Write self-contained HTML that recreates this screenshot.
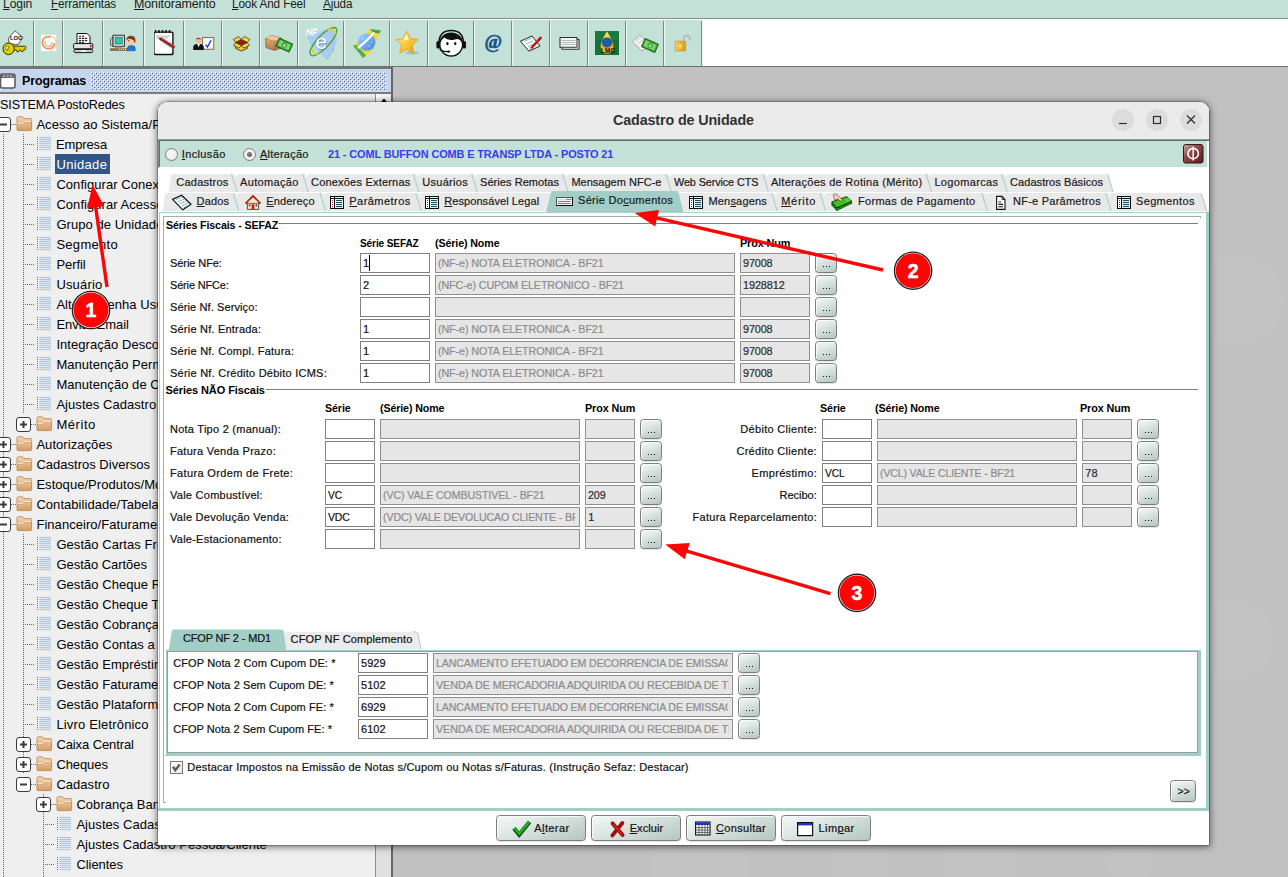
<!DOCTYPE html>
<html><head><meta charset="utf-8"><title>Cadastro de Unidade</title>
<style>
html,body{margin:0;padding:0;}
html{width:1288px;height:877px;overflow:hidden;}
body{width:1288px;height:877px;overflow:hidden;position:relative;background:#c0c0c0;font-family:'Liberation Sans',sans-serif;}
div,span.t,svg.ab{position:absolute;box-sizing:border-box;}
#root{left:0;top:0;width:1288px;height:877px;overflow:hidden;}
span.t{white-space:pre;}
span.k{-webkit-text-stroke:0.2px currentColor;}
u{text-decoration:underline;text-underline-offset:1px;}
.in{background:#fff;border:1px solid #808080;}
.dis{background:#e6e6e6;border:1px solid #8f8f8f;}
.btn{border:1px solid #7d7d7d;border-radius:3.5px;background:linear-gradient(160deg,#f3f8f6 0%,#e2ebe8 30%,#cbd8d4 65%,#b6c6c2 100%);box-shadow:inset 1px 1px 0 rgba(255,255,255,.7),0 1px 0 rgba(0,0,0,.10);}
.tab{background:#ebebeb;}

</style></head><body>
<div id="root">
<div style="left:0px;top:0px;width:1288px;height:877px;background:#c1c1c1;"></div>
<div style="left:646px;top:134px;width:52px;height:52px;border-radius:50%;background:rgba(255,255,255,0.05);"></div>
<div style="left:525px;top:155px;width:40px;height:40px;border-radius:50%;background:rgba(255,255,255,0.04);"></div>
<div style="left:576px;top:126px;width:28px;height:28px;border-radius:50%;background:rgba(255,255,255,0.04);"></div>
<div style="left:1030px;top:110px;width:120px;height:120px;border-radius:50%;background:rgba(255,255,255,0.025);"></div>
<div style="left:1195px;top:600px;width:80px;height:80px;border-radius:50%;background:rgba(255,255,255,0.03);"></div>
<div style="left:1195px;top:255px;width:90px;height:90px;border-radius:50%;background:rgba(255,255,255,0.02);"></div>
<div style="left:940px;top:830px;width:80px;height:80px;border-radius:50%;background:rgba(255,255,255,0.03);"></div>
<div style="left:830px;top:832px;width:60px;height:60px;border-radius:50%;background:rgba(255,255,255,0.03);"></div>
<div style="left:650px;top:820px;width:100px;height:100px;border-radius:50%;background:rgba(255,255,255,0.03);"></div>
<div style="left:1105px;top:835px;width:50px;height:50px;border-radius:50%;background:rgba(255,255,255,0.03);"></div>
<div style="left:0px;top:0px;width:1288px;height:18px;background:#c3e1d6;"></div>
<div style="left:0px;top:18px;width:1288px;height:1px;background:#878c89;"></div>
<div style="left:0px;top:19px;width:1288px;height:1px;background:#fbfdfc;"></div>
<span class="t" style="left:3.1px;top:-5.03px;font-size:12.5px;line-height:18px;color:#1a1a1a;letter-spacing:-0.120px;transform:scaleX(0.9697);transform-origin:0 0;"><u>L</u>ogin</span>
<span class="t" style="left:50.5px;top:-5.03px;font-size:12.5px;line-height:18px;color:#1a1a1a;letter-spacing:-0.120px;transform:scaleX(0.9360);transform-origin:0 0;"><u>F</u>erramentas</span>
<span class="t" style="left:133.5px;top:-5.03px;font-size:12.5px;line-height:18px;color:#1a1a1a;letter-spacing:-0.120px;transform:scaleX(0.9971);transform-origin:0 0;"><u>M</u>onitoramento</span>
<span class="t" style="left:232.3px;top:-5.03px;font-size:12.5px;line-height:18px;color:#1a1a1a;letter-spacing:-0.120px;transform:scaleX(0.9378);transform-origin:0 0;"><u>L</u>ook And Feel</span>
<span class="t" style="left:323.0px;top:-5.03px;font-size:12.5px;line-height:18px;color:#1a1a1a;letter-spacing:-0.120px;transform:scaleX(0.9364);transform-origin:0 0;"><u>A</u>juda</span>
<div style="left:0px;top:20px;width:1288px;height:46px;background:#ffffff;"></div>
<div style="left:0px;top:20px;width:702px;height:46px;background:#c3e1d6;"></div>
<div style="left:33px;top:21px;width:1px;height:45px;background:#7f8683;"></div>
<div style="left:34px;top:21px;width:1px;height:45px;background:#eef6f2;"></div>
<div style="left:62px;top:21px;width:1px;height:45px;background:#7f8683;"></div>
<div style="left:63px;top:21px;width:1px;height:45px;background:#eef6f2;"></div>
<div style="left:102px;top:21px;width:1px;height:45px;background:#7f8683;"></div>
<div style="left:103px;top:21px;width:1px;height:45px;background:#eef6f2;"></div>
<div style="left:143px;top:21px;width:1px;height:45px;background:#7f8683;"></div>
<div style="left:144px;top:21px;width:1px;height:45px;background:#eef6f2;"></div>
<div style="left:183px;top:21px;width:1px;height:45px;background:#7f8683;"></div>
<div style="left:184px;top:21px;width:1px;height:45px;background:#eef6f2;"></div>
<div style="left:221px;top:21px;width:1px;height:45px;background:#7f8683;"></div>
<div style="left:222px;top:21px;width:1px;height:45px;background:#eef6f2;"></div>
<div style="left:259px;top:21px;width:1px;height:45px;background:#7f8683;"></div>
<div style="left:260px;top:21px;width:1px;height:45px;background:#eef6f2;"></div>
<div style="left:297px;top:21px;width:1px;height:45px;background:#7f8683;"></div>
<div style="left:298px;top:21px;width:1px;height:45px;background:#eef6f2;"></div>
<div style="left:343px;top:21px;width:1px;height:45px;background:#7f8683;"></div>
<div style="left:344px;top:21px;width:1px;height:45px;background:#eef6f2;"></div>
<div style="left:389px;top:21px;width:1px;height:45px;background:#7f8683;"></div>
<div style="left:390px;top:21px;width:1px;height:45px;background:#eef6f2;"></div>
<div style="left:427px;top:21px;width:1px;height:45px;background:#7f8683;"></div>
<div style="left:428px;top:21px;width:1px;height:45px;background:#eef6f2;"></div>
<div style="left:473px;top:21px;width:1px;height:45px;background:#7f8683;"></div>
<div style="left:474px;top:21px;width:1px;height:45px;background:#eef6f2;"></div>
<div style="left:511px;top:21px;width:1px;height:45px;background:#7f8683;"></div>
<div style="left:512px;top:21px;width:1px;height:45px;background:#eef6f2;"></div>
<div style="left:549px;top:21px;width:1px;height:45px;background:#7f8683;"></div>
<div style="left:550px;top:21px;width:1px;height:45px;background:#eef6f2;"></div>
<div style="left:587px;top:21px;width:1px;height:45px;background:#7f8683;"></div>
<div style="left:588px;top:21px;width:1px;height:45px;background:#eef6f2;"></div>
<div style="left:625px;top:21px;width:1px;height:45px;background:#7f8683;"></div>
<div style="left:626px;top:21px;width:1px;height:45px;background:#eef6f2;"></div>
<div style="left:663px;top:21px;width:1px;height:45px;background:#7f8683;"></div>
<div style="left:664px;top:21px;width:1px;height:45px;background:#eef6f2;"></div>
<div style="left:701px;top:21px;width:1px;height:45px;background:#7f8683;"></div>
<div style="left:702px;top:21px;width:1px;height:45px;background:#eef6f2;"></div>
<div style="left:0px;top:66px;width:1288px;height:1px;background:#6f6f6f;"></div>
<div style="left:0px;top:67px;width:393px;height:2px;background:#757575;"></div>
<svg class="ab" style="left:0;top:0" width="702" height="66"><defs>
<linearGradient id="gStar" x1="0" y1="0" x2="1" y2="1"><stop offset="0" stop-color="#fff3a0"/><stop offset=".5" stop-color="#fbc93c"/><stop offset="1" stop-color="#e89a18"/></linearGradient>
<linearGradient id="gGlobe" x1="0" y1="0" x2="1" y2="1"><stop offset="0" stop-color="#a8d4fa"/><stop offset="1" stop-color="#3f86dd"/></linearGradient>
<linearGradient id="gBox" x1="0" y1="0" x2="0" y2="1"><stop offset="0" stop-color="#e2b98a"/><stop offset="1" stop-color="#b5793f"/></linearGradient>
<linearGradient id="gLock" x1="0" y1="0" x2="1" y2="0"><stop offset="0" stop-color="#f7d25a"/><stop offset="1" stop-color="#d9a018"/></linearGradient>
</defs><path d="M8.4 38.2 L15 30.8 L22.8 37.4 L18 44.6 L9.4 43.8 Z" fill="#fff" stroke="#4a4a4a" stroke-width=".9"/><text x="10" y="40.4" font-family="Liberation Sans,sans-serif" font-size="5.8" font-weight="bold" fill="#111">LOG</text><path d="M11 46.2 H25.2 L26 47.6 L25 49.8 H23.6 L22.8 51.6 H21.4 L20.6 50 H19.4 L18.6 51.8 H17 L16.2 50 H11 Z" fill="#e3d000" stroke="#2a2600" stroke-width=".9" stroke-linejoin="round"/><ellipse cx="8.6" cy="48.8" rx="5.6" ry="5.8" fill="#e3d000" stroke="#2a2600" stroke-width="1"/><path d="M6 46.6 Q8.4 45 9.4 47 Q7 48 8 50.2 Q6 50.4 5.6 48.6 Z" fill="#fff" stroke="#2a2600" stroke-width=".6"/><rect x="41" y="34.8" width="15.2" height="16.2" fill="#fdfcfa"/><path d="M51 37 A6.2 6.2 0 1 0 54.6 43.4" fill="none" stroke="#f08b4f" stroke-width="1.5"/><path d="M45.4 41 A3.6 3.6 0 1 0 52 42" fill="none" stroke="#f4a070" stroke-width="1.1"/><path d="M52.5 36.6 A7.4 7.4 0 0 1 50.4 50.2" fill="none" stroke="#f9b48a" stroke-width="1"/><path d="M77 44 V33.5 H87 L90 36.5 V44 Z" fill="#fff" stroke="#111" stroke-width="1"/><path d="M79 36.2 H85 M79 38.4 H88 M79 40.6 H88 M79 42.6 H84" stroke="#222" stroke-width="1.1" stroke-dasharray="2.2 .8"/><rect x="73.6" y="43.6" width="19.2" height="5.2" rx="1" fill="#e4e4e4" stroke="#111" stroke-width="1"/><rect x="90" y="45" width="1.5" height="2.4" fill="#e11"/><rect x="74" y="49.4" width="18.6" height="3.2" rx="1.2" fill="#c9c9c9" stroke="#111" stroke-width="1"/><rect x="81" y="50.3" width="5" height="1.4" fill="#fff"/><path d="M110.5 39 L113 37 V46 L110.5 45 Z" fill="#cfcfcf" stroke="#333" stroke-width=".7"/><rect x="113" y="35.2" width="11.4" height="11.2" fill="#d6d6d6" stroke="#222" stroke-width=".9"/><rect x="115.2" y="37.2" width="7" height="6.8" fill="#2fc6a8" stroke="#1a6e62" stroke-width=".6"/><rect x="115" y="46.6" width="7" height="1.6" fill="#999"/><rect x="110" y="48.3" width="18" height="2.6" fill="#8a6a42"/><path d="M119 49.5 H127" stroke="#eee" stroke-width="1" stroke-dasharray="1 1"/><circle cx="130.6" cy="40.8" r="4.4" fill="#f7c9a4"/><path d="M126.2 40.5 Q126.5 35.5 131.5 35.8 Q136 36.2 135.4 42 Q134.4 44 133.8 40.6 Q131 38.4 128 39 Z" fill="#7a3b12"/><path d="M127.6 50.8 V47.8 Q127.8 45.6 130.6 45.6 Q135 45.6 135.2 48 V50.8 Z" fill="#1b78d6" stroke="#0e4a8c" stroke-width=".5"/><rect x="128.3" y="40" width="1" height="1.3" fill="#222"/><rect x="154" y="31.6" width="19.6" height="23.6" rx="1.5" fill="#111"/><rect x="154.6" y="32.8" width="17.6" height="21" rx="1" fill="#fdfdfd"/><path d="M155.5 30 v3 M159 30 v3 M162.5 30 v3 M166 30 v3 M169.5 30 v3" stroke="#111" stroke-width="1.5"/><path d="M156 36.2 H170 M156 38 H168" stroke="#aaa" stroke-width=".8"/><path d="M160.2 38.6 L174.6 47.6" stroke="#8c1f1f" stroke-width="3"/><path d="M161.2 38 L175 46.6" stroke="#d65a5a" stroke-width="1"/><path d="M158.2 37.4 L162 38.4 L160.4 40.6 Z" fill="#333"/><path d="M162 42 L173 49" stroke="#999" stroke-width="1" opacity=".6"/><rect x="202.4" y="37.6" width="11.4" height="11.6" fill="#fff8ee" stroke="#7a5a3a" stroke-width=".9"/><path d="M205.6 44.6 L207.4 47 L211 40.4" fill="none" stroke="#1a34e8" stroke-width="1.3"/><circle cx="198.6" cy="40.6" r="3" fill="#f3b89a"/><path d="M195.6 39.6 Q198.6 35.8 201.6 39.6 Q198.6 38.2 195.6 39.6 Z" fill="#6a3a1a"/><path d="M193.2 50 V46.8 Q193.6 44.4 197 44 L198.6 46.4 L200.2 44 Q203.4 44.4 203.8 47 V50 Z" fill="#111"/><path d="M197.6 44.2 L198.6 47.6 L199.6 44.2 Z" fill="#fff"/><path d="M235.6 42.4 L241.4 45.6 L247.4 42.4 V48.4 L241.4 51 L235.6 48.4 Z" fill="#f1c233" stroke="#3a2a00" stroke-width=".8"/><path d="M235.6 42.4 L241.4 39.4 L247.4 42.4 L241.4 45.6 Z" fill="#a3160e" stroke="#3a2a00" stroke-width=".7"/><path d="M235.6 42.4 L233.4 39.4 L238.6 36.6 L241.4 39.4 Z M247.4 42.4 L249.8 39.4 L244.4 36.4 L241.4 39.4 Z M235.6 42.6 L233.6 45.6 L239 48 L241.4 45.6 Z M247.4 42.6 L249.4 45.4 L244 48 L241.4 45.6 Z" fill="#f6d250" stroke="#3a2a00" stroke-width=".7"/><path d="M265.6 38.6 L271.8 35.6 L281.4 38 L281 48 L274.6 50.4 L266 47.6 Z" fill="url(#gBox)" stroke="#7c5226" stroke-width=".7"/><path d="M265.6 38.6 L274.8 41 L281.4 38 M274.8 41 L274.6 50.4" fill="none" stroke="#8a5c2c" stroke-width=".7"/><path d="M265.6 38.6 L271.8 35.6 L281.4 38 L274.8 41 Z" fill="#ecc79c"/><g transform="rotate(24 284 45)"><rect x="277" y="40.6" width="14.6" height="8.8" fill="#2f9e2a" stroke="#174d12" stroke-width=".8"/><rect x="278.4" y="42" width="11.8" height="6" fill="#7ad46a"/><ellipse cx="284.3" cy="45" rx="2.4" ry="2.8" fill="#2f8e2a"/><text x="283" y="47" font-size="5" font-family="Liberation Sans,sans-serif" font-weight="bold" fill="#d8ffd0">$</text></g><path d="M311 33.4 Q315 31.6 319.6 32.6 L324 29.4 Q331 28.6 334.6 33 L336.8 37.6 Q336.6 44 334 47.6 Q333.6 52 330 54.6 L327.6 58.8 L322.6 57 L320.4 52.4 Q314.6 51.4 313 46.6 Q308.6 44.6 309.6 40.6 Q306 38.6 307 36.2 Q308 34 311 33.4 Z" fill="#a8cdf4"/><path d="M334 47.6 Q333.6 52 330 54.6 L327.6 58.8 L325.6 58" fill="none" stroke="#7f93ad" stroke-width=".8" opacity=".7"/><ellipse cx="323.4" cy="41.6" rx="6.2" ry="18.4" transform="rotate(43 323.4 41.6)" fill="none" stroke="#58a23a" stroke-width="1.5"/><path d="M312.4 48.6 Q312.4 54.6 318.4 53.6" fill="none" stroke="#d6cf3a" stroke-width="1.6"/><path d="M327.6 29.6 Q335.4 28.4 335.4 34.6" fill="none" stroke="#d6cf3a" stroke-width="1.6"/><text x="316.4" y="50" font-family="Liberation Sans,sans-serif" font-size="21" fill="#6b7890" opacity=".8">e</text><text x="315.6" y="49.2" font-family="Liberation Sans,sans-serif" font-size="21" fill="#fff">e</text><text x="306.6" y="35.2" font-family="Liberation Sans,sans-serif" font-size="8.8" font-weight="bold" font-style="italic" fill="#8a96a6">NF</text><text x="306" y="34.6" font-family="Liberation Sans,sans-serif" font-size="8.8" font-weight="bold" font-style="italic" fill="#fff" stroke="#fff" stroke-width=".3">NF</text><path d="M353 45.6 L370 29 L381 30.6 L378 37 L373 50 L363 58 L361.6 52 Z" fill="#f2d838"/><path d="M370 29 L381 30.6 L379.4 33.6 L373 32.4 Z" fill="#3fa845"/><path d="M353 45.6 L363 58 L366 55.4 L356.4 45 Z" fill="#3fa845" opacity=".9"/><circle cx="366.6" cy="42" r="8.8" fill="url(#gGlobe)"/><path d="M358.6 47.6 Q366 41.6 373.6 33.2" fill="none" stroke="#fff" stroke-width="2.2" stroke-linecap="round"/><circle cx="363" cy="38.6" r=".6" fill="#fff"/><circle cx="369" cy="46" r=".6" fill="#fff"/><circle cx="371.6" cy="42.6" r=".5" fill="#fff"/><ellipse cx="412" cy="52.8" rx="7" ry="1.6" fill="#6b8f80" opacity=".35"/><path d="M406.6 31 L410.2 38.6 L418 39.6 L412.2 45 L413.8 53.4 L406.6 49.2 L399.8 53 L401.4 45 L396.6 39.8 L403.4 38.6 Z" fill="url(#gStar)" stroke="#e8a21c" stroke-width=".9" stroke-linejoin="round"/><path d="M406.4 34 L408.8 39.8 L403 40.2 Z" fill="#fffbe0" opacity=".8"/><circle cx="451.2" cy="44.6" r="11.4" fill="#fff" stroke="#111" stroke-width="1.4"/><path d="M440.4 43 Q440 33.4 451.2 33 Q462.4 33.4 462 43 Q459.6 38 455 39.4 Q448.6 41.4 444 37.6 Q441.4 39.4 440.4 43 Z" fill="#111"/><path d="M439 44 Q438.6 30.6 451.2 30.6 Q463.8 30.6 463.4 44" fill="none" stroke="#111" stroke-width="1.5"/><rect x="436.4" y="41" width="3.6" height="7.6" rx="1.6" fill="#111"/><rect x="462.4" y="41" width="3.6" height="7.6" rx="1.6" fill="#111"/><ellipse cx="447.4" cy="43.6" rx="1.2" ry="1.6" fill="#111"/><ellipse cx="455.2" cy="43.6" rx="1.2" ry="1.6" fill="#111"/><path d="M439.6 48.6 Q441.6 51.8 447.6 51.6" fill="none" stroke="#111" stroke-width="1.2"/><ellipse cx="448.6" cy="51.6" rx="1.8" ry="1.1" fill="#111"/><text x="484.4" y="48" font-family="Liberation Serif,serif" font-size="18.5" font-weight="bold" fill="#14508c" stroke="#14508c" stroke-width=".5" textLength="17.5" lengthAdjust="spacingAndGlyphs">@</text><path d="M520.4 41.2 L532 36 L540 46 L529 51.2 Z" fill="#fff" stroke="#111" stroke-width=".9"/><path d="M524 41.4 L531.6 38 M526 44 L533.6 40.6 M528 46.6 L535.6 43.2" stroke="#5aa" stroke-width=".8"/><path d="M531.4 48 L540.6 37.8" stroke="#c41414" stroke-width="2.6" stroke-linecap="round"/><path d="M529.4 50.6 L532.4 49.2 L530.4 47.2 Z" fill="#f5e2c0" stroke="#733" stroke-width=".4"/><rect x="562" y="39.6" width="17" height="9.6" fill="#fff" stroke="#111" stroke-width=".9"/><rect x="560" y="37.6" width="17" height="9.6" fill="#fff" stroke="#111" stroke-width=".9"/><path d="M561.4 40.4 H575.6 M561.4 42.4 H575.6 M561.4 44.4 H575.6" stroke="#9aa" stroke-width=".9"/><rect x="595" y="31" width="24" height="24" fill="#16703a"/><rect x="595" y="31" width="24" height="9" fill="#1f7f48" opacity=".6"/><path d="M607 31.6 Q600 42.6 600.6 47 Q601 53.6 607 53.8 Q613 53.6 613.4 47 Q614 42.6 607 31.6 Z" fill="#f5a81c"/><path d="M607 31.6 Q604.6 35.6 603.4 38.4 L610.6 38.4 Q609.4 35.6 607 31.6 Z" fill="#f8e03a"/><circle cx="607" cy="42.4" r="5.2" fill="#1e5aa8"/><text x="600.8" y="53.4" font-family="Liberation Sans,sans-serif" font-size="6.4" font-weight="bold" fill="#111" letter-spacing=".3">LMC</text><path d="M632.4 41.6 L640 35 L649.6 44.6 L642 51 Z" fill="#f2f2f2" stroke="#9a9a9a" stroke-width=".8"/><path d="M636 41 L641 37 M638 43.4 L643 39.4" stroke="#bbb" stroke-width=".8"/><g transform="rotate(24 650 45.6)"><rect x="642.6" y="41" width="14.6" height="9" fill="#2f9e2a" stroke="#174d12" stroke-width=".8"/><rect x="644" y="42.4" width="11.8" height="6.2" fill="#7ad46a"/><ellipse cx="650" cy="45.5" rx="2.4" ry="2.8" fill="#2f8e2a"/><text x="648.6" y="47.5" font-size="5" font-family="Liberation Sans,sans-serif" font-weight="bold" fill="#d8ffd0">$</text></g><path d="M683.6 41.6 V38.6 Q683.8 35.6 686.8 35.6 Q689.8 35.6 690 38.8 V40.4" fill="none" stroke="#b8b8b8" stroke-width="1.6"/><rect x="675.2" y="41.2" width="10.4" height="9.8" rx="1" fill="url(#gLock)" stroke="#c08a10" stroke-width=".6"/><path d="M681.4 44.6 L678.4 46 L681.4 47.6 Z" fill="#fff2c0"/></svg>
<div style="left:0px;top:69px;width:391px;height:23px;background:#c5d6ee;"></div>
<svg class="ab" style="left:91px;top:72px" width="295" height="19"><defs><pattern id="grip" width="4" height="4" patternUnits="userSpaceOnUse"><rect x="1" y="1" width="1" height="1" fill="#5c646e"/><rect x="0" y="0" width="1" height="1" fill="#fff"/><rect x="3" y="3" width="1" height="1" fill="#5c646e"/><rect x="2" y="2" width="1" height="1" fill="#fff"/></pattern></defs><rect width="295" height="19" fill="url(#grip)"/></svg>
<svg class="ab" style="left:0px;top:73px" width="18" height="17"><rect x="0.5" y="1" width="14.5" height="14" rx="2" fill="#fff" stroke="#5a5a5a" stroke-width="1.6"/><rect x="1" y="1.5" width="13.5" height="3.5" fill="#6a6a6a"/><rect x="3" y="2.6" width="2" height="1" fill="#ddd"/><rect x="6.5" y="2.6" width="2" height="1" fill="#ddd"/><rect x="10" y="2.6" width="2" height="1" fill="#ddd"/></svg>
<span class="t" style="left:21.7px;top:71.87px;font-size:12.5px;line-height:18px;color:#000;letter-spacing:-0.120px;font-weight:bold;transform:scaleX(0.9976);transform-origin:0 0;">Programas</span>
<div style="left:0px;top:92px;width:391px;height:2px;background:#7b7b7b;"></div>
<div style="left:0px;top:94px;width:391px;height:783px;background:#efefef;"></div>
<div style="left:375px;top:94px;width:16px;height:783px;background:#e0e0e0;border-left:1px solid #8c8c8c;"></div>
<div style="left:376px;top:94px;width:15px;height:16px;background:linear-gradient(135deg,#fff,#e4e4e4);border-bottom:1px solid #999;"></div>
<svg class="ab" style="left:378px;top:96px" width="12" height="8"><path d="M2.5 6.5 L6 2.5 L9.5 6.5 Z" fill="#000"/></svg>
<div style="left:391px;top:67px;width:2px;height:810px;background:#666;"></div>
<div style="left:3px;top:134px;width:1px;height:743px;background:repeating-linear-gradient(to bottom,#666 0 1px,transparent 1px 2px);"></div>
<div style="left:23px;top:134px;width:1px;height:280px;background:repeating-linear-gradient(to bottom,#666 0 1px,transparent 1px 2px);"></div>
<div style="left:23px;top:534px;width:1px;height:240px;background:repeating-linear-gradient(to bottom,#666 0 1px,transparent 1px 2px);"></div>
<div style="left:43px;top:794px;width:1px;height:83px;background:repeating-linear-gradient(to bottom,#666 0 1px,transparent 1px 2px);"></div>
<span class="t" style="left:0.3px;top:95.70px;font-size:13px;line-height:18px;color:#000;letter-spacing:-0.120px;transform:scaleX(0.9686);transform-origin:0 0;">SISTEMA PostoRedes</span>
<svg class="ab" style="left:-4px;top:117px" width="16" height="16"><rect x="0.5" y="0.5" width="14" height="14" rx="2.5" fill="#fff" stroke="#3a3a3a"/><rect x="4" y="6.5" width="7" height="2" fill="#3c3c3c"/></svg>
<div style="left:11px;top:124px;width:5px;height:1px;background:repeating-linear-gradient(to right,#666 0 1px,transparent 1px 2px);"></div>
<svg class="ab" style="left:15.5px;top:115.6px" width="17" height="16"><defs><linearGradient id="fg" x1="0" y1="0" x2="0" y2="1"><stop offset="0" stop-color="#f6d6b4"/><stop offset="1" stop-color="#d39c62"/></linearGradient></defs><path d="M1 2.2 Q1 0.8 2.4 0.8 L6 0.8 Q7 0.8 7.6 2 L8 2.6 L14.6 2.6 Q15.6 2.6 15.6 3.6 L15.6 13.6 Q15.6 14.6 14.6 14.6 L2 14.6 Q1 14.6 1 13.6 Z" fill="url(#fg)" stroke="#c08a55" stroke-width="0.9"/><path d="M1.3 7.6 L6.2 7.6 L8 5.6 L15.3 5.6" fill="none" stroke="#fbe9d6" stroke-width="1"/><path d="M1.3 8.5 L6.5 8.5 L8.3 6.5 L15.3 6.5" fill="none" stroke="#c99560" stroke-width="0.7" opacity=".7"/></svg>
<span class="t" style="left:36.4px;top:115.70px;font-size:13px;line-height:18px;color:#000;letter-spacing:0.050px;">Acesso ao Sistema/Perfil</span>
<div style="left:23px;top:144px;width:12px;height:1px;background:repeating-linear-gradient(to right,#666 0 1px,transparent 1px 2px);"></div>
<svg class="ab" style="left:37px;top:137px" width="15" height="14"><rect x="0" y="0" width="1" height="1" fill="#2ca02c"/><rect x="2.3" y="0" width="11.7" height="1" fill="#a9bfd6" opacity="0.95"/><rect x="2.3" y="1" width="11.7" height="1" fill="#dfe7ee"/><rect x="0" y="2" width="1" height="1" fill="#2ca02c"/><rect x="2.3" y="2" width="11.7" height="1" fill="#a9bfd6" opacity="0.9099999999999999"/><rect x="2.3" y="3" width="11.7" height="1" fill="#dfe7ee"/><rect x="0" y="4" width="1" height="1" fill="#2ca02c"/><rect x="2.3" y="4" width="11.7" height="1" fill="#a9bfd6" opacity="0.87"/><rect x="2.3" y="5" width="11.7" height="1" fill="#dfe7ee"/><rect x="0" y="6" width="1" height="1" fill="#2ca02c"/><rect x="2.3" y="6" width="11.7" height="1" fill="#a9bfd6" opacity="0.83"/><rect x="2.3" y="7" width="11.7" height="1" fill="#dfe7ee"/><rect x="0" y="8" width="1" height="1" fill="#2ca02c"/><rect x="2.3" y="8" width="11.7" height="1" fill="#a9bfd6" opacity="0.7899999999999999"/><rect x="2.3" y="9" width="11.7" height="1" fill="#dfe7ee"/><rect x="0" y="10" width="1" height="1" fill="#2ca02c"/><rect x="2.3" y="10" width="11.7" height="1" fill="#a9bfd6" opacity="0.75"/><rect x="2.3" y="11" width="11.7" height="1" fill="#dfe7ee"/><rect x="0" y="12" width="1" height="1" fill="#2ca02c"/><rect x="2.3" y="12" width="11.7" height="1" fill="#a9bfd6" opacity="0.71"/><rect x="2.3" y="13" width="11.7" height="1" fill="#dfe7ee"/></svg>
<span class="t" style="left:56.4px;top:135.70px;font-size:13px;line-height:18px;color:#000;letter-spacing:-0.120px;transform:scaleX(0.9978);transform-origin:0 0;">Empresa</span>
<div style="left:23px;top:164px;width:12px;height:1px;background:repeating-linear-gradient(to right,#666 0 1px,transparent 1px 2px);"></div>
<svg class="ab" style="left:37px;top:157px" width="15" height="14"><rect x="0" y="0" width="1" height="1" fill="#2ca02c"/><rect x="2.3" y="0" width="11.7" height="1" fill="#a9bfd6" opacity="0.95"/><rect x="2.3" y="1" width="11.7" height="1" fill="#dfe7ee"/><rect x="0" y="2" width="1" height="1" fill="#2ca02c"/><rect x="2.3" y="2" width="11.7" height="1" fill="#a9bfd6" opacity="0.9099999999999999"/><rect x="2.3" y="3" width="11.7" height="1" fill="#dfe7ee"/><rect x="0" y="4" width="1" height="1" fill="#2ca02c"/><rect x="2.3" y="4" width="11.7" height="1" fill="#a9bfd6" opacity="0.87"/><rect x="2.3" y="5" width="11.7" height="1" fill="#dfe7ee"/><rect x="0" y="6" width="1" height="1" fill="#2ca02c"/><rect x="2.3" y="6" width="11.7" height="1" fill="#a9bfd6" opacity="0.83"/><rect x="2.3" y="7" width="11.7" height="1" fill="#dfe7ee"/><rect x="0" y="8" width="1" height="1" fill="#2ca02c"/><rect x="2.3" y="8" width="11.7" height="1" fill="#a9bfd6" opacity="0.7899999999999999"/><rect x="2.3" y="9" width="11.7" height="1" fill="#dfe7ee"/><rect x="0" y="10" width="1" height="1" fill="#2ca02c"/><rect x="2.3" y="10" width="11.7" height="1" fill="#a9bfd6" opacity="0.75"/><rect x="2.3" y="11" width="11.7" height="1" fill="#dfe7ee"/><rect x="0" y="12" width="1" height="1" fill="#2ca02c"/><rect x="2.3" y="12" width="11.7" height="1" fill="#a9bfd6" opacity="0.71"/><rect x="2.3" y="13" width="11.7" height="1" fill="#dfe7ee"/></svg>
<div style="left:55px;top:154px;width:55px;height:20px;background:#30568a;"></div>
<span class="t" style="left:56.6px;top:155.70px;font-size:13px;line-height:18px;color:#fff;letter-spacing:0.310px;">Unidade</span>
<div style="left:23px;top:184px;width:12px;height:1px;background:repeating-linear-gradient(to right,#666 0 1px,transparent 1px 2px);"></div>
<svg class="ab" style="left:37px;top:177px" width="15" height="14"><rect x="0" y="0" width="1" height="1" fill="#2ca02c"/><rect x="2.3" y="0" width="11.7" height="1" fill="#a9bfd6" opacity="0.95"/><rect x="2.3" y="1" width="11.7" height="1" fill="#dfe7ee"/><rect x="0" y="2" width="1" height="1" fill="#2ca02c"/><rect x="2.3" y="2" width="11.7" height="1" fill="#a9bfd6" opacity="0.9099999999999999"/><rect x="2.3" y="3" width="11.7" height="1" fill="#dfe7ee"/><rect x="0" y="4" width="1" height="1" fill="#2ca02c"/><rect x="2.3" y="4" width="11.7" height="1" fill="#a9bfd6" opacity="0.87"/><rect x="2.3" y="5" width="11.7" height="1" fill="#dfe7ee"/><rect x="0" y="6" width="1" height="1" fill="#2ca02c"/><rect x="2.3" y="6" width="11.7" height="1" fill="#a9bfd6" opacity="0.83"/><rect x="2.3" y="7" width="11.7" height="1" fill="#dfe7ee"/><rect x="0" y="8" width="1" height="1" fill="#2ca02c"/><rect x="2.3" y="8" width="11.7" height="1" fill="#a9bfd6" opacity="0.7899999999999999"/><rect x="2.3" y="9" width="11.7" height="1" fill="#dfe7ee"/><rect x="0" y="10" width="1" height="1" fill="#2ca02c"/><rect x="2.3" y="10" width="11.7" height="1" fill="#a9bfd6" opacity="0.75"/><rect x="2.3" y="11" width="11.7" height="1" fill="#dfe7ee"/><rect x="0" y="12" width="1" height="1" fill="#2ca02c"/><rect x="2.3" y="12" width="11.7" height="1" fill="#a9bfd6" opacity="0.71"/><rect x="2.3" y="13" width="11.7" height="1" fill="#dfe7ee"/></svg>
<span class="t" style="left:56.4px;top:175.70px;font-size:13px;line-height:18px;color:#000;letter-spacing:0.050px;">Configurar Conexões</span>
<div style="left:23px;top:204px;width:12px;height:1px;background:repeating-linear-gradient(to right,#666 0 1px,transparent 1px 2px);"></div>
<svg class="ab" style="left:37px;top:197px" width="15" height="14"><rect x="0" y="0" width="1" height="1" fill="#2ca02c"/><rect x="2.3" y="0" width="11.7" height="1" fill="#a9bfd6" opacity="0.95"/><rect x="2.3" y="1" width="11.7" height="1" fill="#dfe7ee"/><rect x="0" y="2" width="1" height="1" fill="#2ca02c"/><rect x="2.3" y="2" width="11.7" height="1" fill="#a9bfd6" opacity="0.9099999999999999"/><rect x="2.3" y="3" width="11.7" height="1" fill="#dfe7ee"/><rect x="0" y="4" width="1" height="1" fill="#2ca02c"/><rect x="2.3" y="4" width="11.7" height="1" fill="#a9bfd6" opacity="0.87"/><rect x="2.3" y="5" width="11.7" height="1" fill="#dfe7ee"/><rect x="0" y="6" width="1" height="1" fill="#2ca02c"/><rect x="2.3" y="6" width="11.7" height="1" fill="#a9bfd6" opacity="0.83"/><rect x="2.3" y="7" width="11.7" height="1" fill="#dfe7ee"/><rect x="0" y="8" width="1" height="1" fill="#2ca02c"/><rect x="2.3" y="8" width="11.7" height="1" fill="#a9bfd6" opacity="0.7899999999999999"/><rect x="2.3" y="9" width="11.7" height="1" fill="#dfe7ee"/><rect x="0" y="10" width="1" height="1" fill="#2ca02c"/><rect x="2.3" y="10" width="11.7" height="1" fill="#a9bfd6" opacity="0.75"/><rect x="2.3" y="11" width="11.7" height="1" fill="#dfe7ee"/><rect x="0" y="12" width="1" height="1" fill="#2ca02c"/><rect x="2.3" y="12" width="11.7" height="1" fill="#a9bfd6" opacity="0.71"/><rect x="2.3" y="13" width="11.7" height="1" fill="#dfe7ee"/></svg>
<span class="t" style="left:56.4px;top:195.70px;font-size:13px;line-height:18px;color:#000;letter-spacing:0.050px;">Configurar Acessos</span>
<div style="left:23px;top:224px;width:12px;height:1px;background:repeating-linear-gradient(to right,#666 0 1px,transparent 1px 2px);"></div>
<svg class="ab" style="left:37px;top:217px" width="15" height="14"><rect x="0" y="0" width="1" height="1" fill="#2ca02c"/><rect x="2.3" y="0" width="11.7" height="1" fill="#a9bfd6" opacity="0.95"/><rect x="2.3" y="1" width="11.7" height="1" fill="#dfe7ee"/><rect x="0" y="2" width="1" height="1" fill="#2ca02c"/><rect x="2.3" y="2" width="11.7" height="1" fill="#a9bfd6" opacity="0.9099999999999999"/><rect x="2.3" y="3" width="11.7" height="1" fill="#dfe7ee"/><rect x="0" y="4" width="1" height="1" fill="#2ca02c"/><rect x="2.3" y="4" width="11.7" height="1" fill="#a9bfd6" opacity="0.87"/><rect x="2.3" y="5" width="11.7" height="1" fill="#dfe7ee"/><rect x="0" y="6" width="1" height="1" fill="#2ca02c"/><rect x="2.3" y="6" width="11.7" height="1" fill="#a9bfd6" opacity="0.83"/><rect x="2.3" y="7" width="11.7" height="1" fill="#dfe7ee"/><rect x="0" y="8" width="1" height="1" fill="#2ca02c"/><rect x="2.3" y="8" width="11.7" height="1" fill="#a9bfd6" opacity="0.7899999999999999"/><rect x="2.3" y="9" width="11.7" height="1" fill="#dfe7ee"/><rect x="0" y="10" width="1" height="1" fill="#2ca02c"/><rect x="2.3" y="10" width="11.7" height="1" fill="#a9bfd6" opacity="0.75"/><rect x="2.3" y="11" width="11.7" height="1" fill="#dfe7ee"/><rect x="0" y="12" width="1" height="1" fill="#2ca02c"/><rect x="2.3" y="12" width="11.7" height="1" fill="#a9bfd6" opacity="0.71"/><rect x="2.3" y="13" width="11.7" height="1" fill="#dfe7ee"/></svg>
<span class="t" style="left:56.4px;top:215.70px;font-size:13px;line-height:18px;color:#000;letter-spacing:0.050px;">Grupo de Unidades</span>
<div style="left:23px;top:244px;width:12px;height:1px;background:repeating-linear-gradient(to right,#666 0 1px,transparent 1px 2px);"></div>
<svg class="ab" style="left:37px;top:237px" width="15" height="14"><rect x="0" y="0" width="1" height="1" fill="#2ca02c"/><rect x="2.3" y="0" width="11.7" height="1" fill="#a9bfd6" opacity="0.95"/><rect x="2.3" y="1" width="11.7" height="1" fill="#dfe7ee"/><rect x="0" y="2" width="1" height="1" fill="#2ca02c"/><rect x="2.3" y="2" width="11.7" height="1" fill="#a9bfd6" opacity="0.9099999999999999"/><rect x="2.3" y="3" width="11.7" height="1" fill="#dfe7ee"/><rect x="0" y="4" width="1" height="1" fill="#2ca02c"/><rect x="2.3" y="4" width="11.7" height="1" fill="#a9bfd6" opacity="0.87"/><rect x="2.3" y="5" width="11.7" height="1" fill="#dfe7ee"/><rect x="0" y="6" width="1" height="1" fill="#2ca02c"/><rect x="2.3" y="6" width="11.7" height="1" fill="#a9bfd6" opacity="0.83"/><rect x="2.3" y="7" width="11.7" height="1" fill="#dfe7ee"/><rect x="0" y="8" width="1" height="1" fill="#2ca02c"/><rect x="2.3" y="8" width="11.7" height="1" fill="#a9bfd6" opacity="0.7899999999999999"/><rect x="2.3" y="9" width="11.7" height="1" fill="#dfe7ee"/><rect x="0" y="10" width="1" height="1" fill="#2ca02c"/><rect x="2.3" y="10" width="11.7" height="1" fill="#a9bfd6" opacity="0.75"/><rect x="2.3" y="11" width="11.7" height="1" fill="#dfe7ee"/><rect x="0" y="12" width="1" height="1" fill="#2ca02c"/><rect x="2.3" y="12" width="11.7" height="1" fill="#a9bfd6" opacity="0.71"/><rect x="2.3" y="13" width="11.7" height="1" fill="#dfe7ee"/></svg>
<span class="t" style="left:56.4px;top:235.70px;font-size:13px;line-height:18px;color:#000;letter-spacing:0.291px;">Segmento</span>
<div style="left:23px;top:264px;width:12px;height:1px;background:repeating-linear-gradient(to right,#666 0 1px,transparent 1px 2px);"></div>
<svg class="ab" style="left:37px;top:257px" width="15" height="14"><rect x="0" y="0" width="1" height="1" fill="#2ca02c"/><rect x="2.3" y="0" width="11.7" height="1" fill="#a9bfd6" opacity="0.95"/><rect x="2.3" y="1" width="11.7" height="1" fill="#dfe7ee"/><rect x="0" y="2" width="1" height="1" fill="#2ca02c"/><rect x="2.3" y="2" width="11.7" height="1" fill="#a9bfd6" opacity="0.9099999999999999"/><rect x="2.3" y="3" width="11.7" height="1" fill="#dfe7ee"/><rect x="0" y="4" width="1" height="1" fill="#2ca02c"/><rect x="2.3" y="4" width="11.7" height="1" fill="#a9bfd6" opacity="0.87"/><rect x="2.3" y="5" width="11.7" height="1" fill="#dfe7ee"/><rect x="0" y="6" width="1" height="1" fill="#2ca02c"/><rect x="2.3" y="6" width="11.7" height="1" fill="#a9bfd6" opacity="0.83"/><rect x="2.3" y="7" width="11.7" height="1" fill="#dfe7ee"/><rect x="0" y="8" width="1" height="1" fill="#2ca02c"/><rect x="2.3" y="8" width="11.7" height="1" fill="#a9bfd6" opacity="0.7899999999999999"/><rect x="2.3" y="9" width="11.7" height="1" fill="#dfe7ee"/><rect x="0" y="10" width="1" height="1" fill="#2ca02c"/><rect x="2.3" y="10" width="11.7" height="1" fill="#a9bfd6" opacity="0.75"/><rect x="2.3" y="11" width="11.7" height="1" fill="#dfe7ee"/><rect x="0" y="12" width="1" height="1" fill="#2ca02c"/><rect x="2.3" y="12" width="11.7" height="1" fill="#a9bfd6" opacity="0.71"/><rect x="2.3" y="13" width="11.7" height="1" fill="#dfe7ee"/></svg>
<span class="t" style="left:56.4px;top:255.70px;font-size:13px;line-height:18px;color:#000;letter-spacing:-0.065px;">Perfil</span>
<div style="left:23px;top:284px;width:12px;height:1px;background:repeating-linear-gradient(to right,#666 0 1px,transparent 1px 2px);"></div>
<svg class="ab" style="left:37px;top:277px" width="15" height="14"><rect x="0" y="0" width="1" height="1" fill="#2ca02c"/><rect x="2.3" y="0" width="11.7" height="1" fill="#a9bfd6" opacity="0.95"/><rect x="2.3" y="1" width="11.7" height="1" fill="#dfe7ee"/><rect x="0" y="2" width="1" height="1" fill="#2ca02c"/><rect x="2.3" y="2" width="11.7" height="1" fill="#a9bfd6" opacity="0.9099999999999999"/><rect x="2.3" y="3" width="11.7" height="1" fill="#dfe7ee"/><rect x="0" y="4" width="1" height="1" fill="#2ca02c"/><rect x="2.3" y="4" width="11.7" height="1" fill="#a9bfd6" opacity="0.87"/><rect x="2.3" y="5" width="11.7" height="1" fill="#dfe7ee"/><rect x="0" y="6" width="1" height="1" fill="#2ca02c"/><rect x="2.3" y="6" width="11.7" height="1" fill="#a9bfd6" opacity="0.83"/><rect x="2.3" y="7" width="11.7" height="1" fill="#dfe7ee"/><rect x="0" y="8" width="1" height="1" fill="#2ca02c"/><rect x="2.3" y="8" width="11.7" height="1" fill="#a9bfd6" opacity="0.7899999999999999"/><rect x="2.3" y="9" width="11.7" height="1" fill="#dfe7ee"/><rect x="0" y="10" width="1" height="1" fill="#2ca02c"/><rect x="2.3" y="10" width="11.7" height="1" fill="#a9bfd6" opacity="0.75"/><rect x="2.3" y="11" width="11.7" height="1" fill="#dfe7ee"/><rect x="0" y="12" width="1" height="1" fill="#2ca02c"/><rect x="2.3" y="12" width="11.7" height="1" fill="#a9bfd6" opacity="0.71"/><rect x="2.3" y="13" width="11.7" height="1" fill="#dfe7ee"/></svg>
<span class="t" style="left:56.4px;top:275.70px;font-size:13px;line-height:18px;color:#000;letter-spacing:0.167px;">Usuário</span>
<div style="left:23px;top:304px;width:12px;height:1px;background:repeating-linear-gradient(to right,#666 0 1px,transparent 1px 2px);"></div>
<svg class="ab" style="left:37px;top:297px" width="15" height="14"><rect x="0" y="0" width="1" height="1" fill="#2ca02c"/><rect x="2.3" y="0" width="11.7" height="1" fill="#a9bfd6" opacity="0.95"/><rect x="2.3" y="1" width="11.7" height="1" fill="#dfe7ee"/><rect x="0" y="2" width="1" height="1" fill="#2ca02c"/><rect x="2.3" y="2" width="11.7" height="1" fill="#a9bfd6" opacity="0.9099999999999999"/><rect x="2.3" y="3" width="11.7" height="1" fill="#dfe7ee"/><rect x="0" y="4" width="1" height="1" fill="#2ca02c"/><rect x="2.3" y="4" width="11.7" height="1" fill="#a9bfd6" opacity="0.87"/><rect x="2.3" y="5" width="11.7" height="1" fill="#dfe7ee"/><rect x="0" y="6" width="1" height="1" fill="#2ca02c"/><rect x="2.3" y="6" width="11.7" height="1" fill="#a9bfd6" opacity="0.83"/><rect x="2.3" y="7" width="11.7" height="1" fill="#dfe7ee"/><rect x="0" y="8" width="1" height="1" fill="#2ca02c"/><rect x="2.3" y="8" width="11.7" height="1" fill="#a9bfd6" opacity="0.7899999999999999"/><rect x="2.3" y="9" width="11.7" height="1" fill="#dfe7ee"/><rect x="0" y="10" width="1" height="1" fill="#2ca02c"/><rect x="2.3" y="10" width="11.7" height="1" fill="#a9bfd6" opacity="0.75"/><rect x="2.3" y="11" width="11.7" height="1" fill="#dfe7ee"/><rect x="0" y="12" width="1" height="1" fill="#2ca02c"/><rect x="2.3" y="12" width="11.7" height="1" fill="#a9bfd6" opacity="0.71"/><rect x="2.3" y="13" width="11.7" height="1" fill="#dfe7ee"/></svg>
<span class="t" style="left:56.4px;top:295.70px;font-size:13px;line-height:18px;color:#000;letter-spacing:0.050px;">Alterar Senha Usuário</span>
<div style="left:23px;top:324px;width:12px;height:1px;background:repeating-linear-gradient(to right,#666 0 1px,transparent 1px 2px);"></div>
<svg class="ab" style="left:37px;top:317px" width="15" height="14"><rect x="0" y="0" width="1" height="1" fill="#2ca02c"/><rect x="2.3" y="0" width="11.7" height="1" fill="#a9bfd6" opacity="0.95"/><rect x="2.3" y="1" width="11.7" height="1" fill="#dfe7ee"/><rect x="0" y="2" width="1" height="1" fill="#2ca02c"/><rect x="2.3" y="2" width="11.7" height="1" fill="#a9bfd6" opacity="0.9099999999999999"/><rect x="2.3" y="3" width="11.7" height="1" fill="#dfe7ee"/><rect x="0" y="4" width="1" height="1" fill="#2ca02c"/><rect x="2.3" y="4" width="11.7" height="1" fill="#a9bfd6" opacity="0.87"/><rect x="2.3" y="5" width="11.7" height="1" fill="#dfe7ee"/><rect x="0" y="6" width="1" height="1" fill="#2ca02c"/><rect x="2.3" y="6" width="11.7" height="1" fill="#a9bfd6" opacity="0.83"/><rect x="2.3" y="7" width="11.7" height="1" fill="#dfe7ee"/><rect x="0" y="8" width="1" height="1" fill="#2ca02c"/><rect x="2.3" y="8" width="11.7" height="1" fill="#a9bfd6" opacity="0.7899999999999999"/><rect x="2.3" y="9" width="11.7" height="1" fill="#dfe7ee"/><rect x="0" y="10" width="1" height="1" fill="#2ca02c"/><rect x="2.3" y="10" width="11.7" height="1" fill="#a9bfd6" opacity="0.75"/><rect x="2.3" y="11" width="11.7" height="1" fill="#dfe7ee"/><rect x="0" y="12" width="1" height="1" fill="#2ca02c"/><rect x="2.3" y="12" width="11.7" height="1" fill="#a9bfd6" opacity="0.71"/><rect x="2.3" y="13" width="11.7" height="1" fill="#dfe7ee"/></svg>
<span class="t" style="left:56.4px;top:315.70px;font-size:13px;line-height:18px;color:#000;letter-spacing:-0.034px;">Enviar Email</span>
<div style="left:23px;top:344px;width:12px;height:1px;background:repeating-linear-gradient(to right,#666 0 1px,transparent 1px 2px);"></div>
<svg class="ab" style="left:37px;top:337px" width="15" height="14"><rect x="0" y="0" width="1" height="1" fill="#2ca02c"/><rect x="2.3" y="0" width="11.7" height="1" fill="#a9bfd6" opacity="0.95"/><rect x="2.3" y="1" width="11.7" height="1" fill="#dfe7ee"/><rect x="0" y="2" width="1" height="1" fill="#2ca02c"/><rect x="2.3" y="2" width="11.7" height="1" fill="#a9bfd6" opacity="0.9099999999999999"/><rect x="2.3" y="3" width="11.7" height="1" fill="#dfe7ee"/><rect x="0" y="4" width="1" height="1" fill="#2ca02c"/><rect x="2.3" y="4" width="11.7" height="1" fill="#a9bfd6" opacity="0.87"/><rect x="2.3" y="5" width="11.7" height="1" fill="#dfe7ee"/><rect x="0" y="6" width="1" height="1" fill="#2ca02c"/><rect x="2.3" y="6" width="11.7" height="1" fill="#a9bfd6" opacity="0.83"/><rect x="2.3" y="7" width="11.7" height="1" fill="#dfe7ee"/><rect x="0" y="8" width="1" height="1" fill="#2ca02c"/><rect x="2.3" y="8" width="11.7" height="1" fill="#a9bfd6" opacity="0.7899999999999999"/><rect x="2.3" y="9" width="11.7" height="1" fill="#dfe7ee"/><rect x="0" y="10" width="1" height="1" fill="#2ca02c"/><rect x="2.3" y="10" width="11.7" height="1" fill="#a9bfd6" opacity="0.75"/><rect x="2.3" y="11" width="11.7" height="1" fill="#dfe7ee"/><rect x="0" y="12" width="1" height="1" fill="#2ca02c"/><rect x="2.3" y="12" width="11.7" height="1" fill="#a9bfd6" opacity="0.71"/><rect x="2.3" y="13" width="11.7" height="1" fill="#dfe7ee"/></svg>
<span class="t" style="left:56.4px;top:335.70px;font-size:13px;line-height:18px;color:#000;letter-spacing:0.050px;">Integração Desconto</span>
<div style="left:23px;top:364px;width:12px;height:1px;background:repeating-linear-gradient(to right,#666 0 1px,transparent 1px 2px);"></div>
<svg class="ab" style="left:37px;top:357px" width="15" height="14"><rect x="0" y="0" width="1" height="1" fill="#2ca02c"/><rect x="2.3" y="0" width="11.7" height="1" fill="#a9bfd6" opacity="0.95"/><rect x="2.3" y="1" width="11.7" height="1" fill="#dfe7ee"/><rect x="0" y="2" width="1" height="1" fill="#2ca02c"/><rect x="2.3" y="2" width="11.7" height="1" fill="#a9bfd6" opacity="0.9099999999999999"/><rect x="2.3" y="3" width="11.7" height="1" fill="#dfe7ee"/><rect x="0" y="4" width="1" height="1" fill="#2ca02c"/><rect x="2.3" y="4" width="11.7" height="1" fill="#a9bfd6" opacity="0.87"/><rect x="2.3" y="5" width="11.7" height="1" fill="#dfe7ee"/><rect x="0" y="6" width="1" height="1" fill="#2ca02c"/><rect x="2.3" y="6" width="11.7" height="1" fill="#a9bfd6" opacity="0.83"/><rect x="2.3" y="7" width="11.7" height="1" fill="#dfe7ee"/><rect x="0" y="8" width="1" height="1" fill="#2ca02c"/><rect x="2.3" y="8" width="11.7" height="1" fill="#a9bfd6" opacity="0.7899999999999999"/><rect x="2.3" y="9" width="11.7" height="1" fill="#dfe7ee"/><rect x="0" y="10" width="1" height="1" fill="#2ca02c"/><rect x="2.3" y="10" width="11.7" height="1" fill="#a9bfd6" opacity="0.75"/><rect x="2.3" y="11" width="11.7" height="1" fill="#dfe7ee"/><rect x="0" y="12" width="1" height="1" fill="#2ca02c"/><rect x="2.3" y="12" width="11.7" height="1" fill="#a9bfd6" opacity="0.71"/><rect x="2.3" y="13" width="11.7" height="1" fill="#dfe7ee"/></svg>
<span class="t" style="left:56.4px;top:355.70px;font-size:13px;line-height:18px;color:#000;letter-spacing:0.050px;">Manutenção Permissões</span>
<div style="left:23px;top:384px;width:12px;height:1px;background:repeating-linear-gradient(to right,#666 0 1px,transparent 1px 2px);"></div>
<svg class="ab" style="left:37px;top:377px" width="15" height="14"><rect x="0" y="0" width="1" height="1" fill="#2ca02c"/><rect x="2.3" y="0" width="11.7" height="1" fill="#a9bfd6" opacity="0.95"/><rect x="2.3" y="1" width="11.7" height="1" fill="#dfe7ee"/><rect x="0" y="2" width="1" height="1" fill="#2ca02c"/><rect x="2.3" y="2" width="11.7" height="1" fill="#a9bfd6" opacity="0.9099999999999999"/><rect x="2.3" y="3" width="11.7" height="1" fill="#dfe7ee"/><rect x="0" y="4" width="1" height="1" fill="#2ca02c"/><rect x="2.3" y="4" width="11.7" height="1" fill="#a9bfd6" opacity="0.87"/><rect x="2.3" y="5" width="11.7" height="1" fill="#dfe7ee"/><rect x="0" y="6" width="1" height="1" fill="#2ca02c"/><rect x="2.3" y="6" width="11.7" height="1" fill="#a9bfd6" opacity="0.83"/><rect x="2.3" y="7" width="11.7" height="1" fill="#dfe7ee"/><rect x="0" y="8" width="1" height="1" fill="#2ca02c"/><rect x="2.3" y="8" width="11.7" height="1" fill="#a9bfd6" opacity="0.7899999999999999"/><rect x="2.3" y="9" width="11.7" height="1" fill="#dfe7ee"/><rect x="0" y="10" width="1" height="1" fill="#2ca02c"/><rect x="2.3" y="10" width="11.7" height="1" fill="#a9bfd6" opacity="0.75"/><rect x="2.3" y="11" width="11.7" height="1" fill="#dfe7ee"/><rect x="0" y="12" width="1" height="1" fill="#2ca02c"/><rect x="2.3" y="12" width="11.7" height="1" fill="#a9bfd6" opacity="0.71"/><rect x="2.3" y="13" width="11.7" height="1" fill="#dfe7ee"/></svg>
<span class="t" style="left:56.4px;top:375.70px;font-size:13px;line-height:18px;color:#000;letter-spacing:0.050px;">Manutenção de Conexão</span>
<div style="left:23px;top:404px;width:12px;height:1px;background:repeating-linear-gradient(to right,#666 0 1px,transparent 1px 2px);"></div>
<svg class="ab" style="left:37px;top:397px" width="15" height="14"><rect x="0" y="0" width="1" height="1" fill="#2ca02c"/><rect x="2.3" y="0" width="11.7" height="1" fill="#a9bfd6" opacity="0.95"/><rect x="2.3" y="1" width="11.7" height="1" fill="#dfe7ee"/><rect x="0" y="2" width="1" height="1" fill="#2ca02c"/><rect x="2.3" y="2" width="11.7" height="1" fill="#a9bfd6" opacity="0.9099999999999999"/><rect x="2.3" y="3" width="11.7" height="1" fill="#dfe7ee"/><rect x="0" y="4" width="1" height="1" fill="#2ca02c"/><rect x="2.3" y="4" width="11.7" height="1" fill="#a9bfd6" opacity="0.87"/><rect x="2.3" y="5" width="11.7" height="1" fill="#dfe7ee"/><rect x="0" y="6" width="1" height="1" fill="#2ca02c"/><rect x="2.3" y="6" width="11.7" height="1" fill="#a9bfd6" opacity="0.83"/><rect x="2.3" y="7" width="11.7" height="1" fill="#dfe7ee"/><rect x="0" y="8" width="1" height="1" fill="#2ca02c"/><rect x="2.3" y="8" width="11.7" height="1" fill="#a9bfd6" opacity="0.7899999999999999"/><rect x="2.3" y="9" width="11.7" height="1" fill="#dfe7ee"/><rect x="0" y="10" width="1" height="1" fill="#2ca02c"/><rect x="2.3" y="10" width="11.7" height="1" fill="#a9bfd6" opacity="0.75"/><rect x="2.3" y="11" width="11.7" height="1" fill="#dfe7ee"/><rect x="0" y="12" width="1" height="1" fill="#2ca02c"/><rect x="2.3" y="12" width="11.7" height="1" fill="#a9bfd6" opacity="0.71"/><rect x="2.3" y="13" width="11.7" height="1" fill="#dfe7ee"/></svg>
<span class="t" style="left:56.4px;top:395.70px;font-size:13px;line-height:18px;color:#000;letter-spacing:0.050px;">Ajustes Cadastro Usuário</span>
<svg class="ab" style="left:16px;top:417px" width="16" height="16"><rect x="0.5" y="0.5" width="14" height="14" rx="2.5" fill="#fff" stroke="#3a3a3a"/><rect x="4" y="6.5" width="7" height="2" fill="#3c3c3c"/><rect x="6.5" y="4" width="2" height="7" fill="#3c3c3c"/></svg>
<div style="left:31px;top:424px;width:5px;height:1px;background:repeating-linear-gradient(to right,#666 0 1px,transparent 1px 2px);"></div>
<svg class="ab" style="left:35.5px;top:415.6px" width="17" height="16"><defs><linearGradient id="fg" x1="0" y1="0" x2="0" y2="1"><stop offset="0" stop-color="#f6d6b4"/><stop offset="1" stop-color="#d39c62"/></linearGradient></defs><path d="M1 2.2 Q1 0.8 2.4 0.8 L6 0.8 Q7 0.8 7.6 2 L8 2.6 L14.6 2.6 Q15.6 2.6 15.6 3.6 L15.6 13.6 Q15.6 14.6 14.6 14.6 L2 14.6 Q1 14.6 1 13.6 Z" fill="url(#fg)" stroke="#c08a55" stroke-width="0.9"/><path d="M1.3 7.6 L6.2 7.6 L8 5.6 L15.3 5.6" fill="none" stroke="#fbe9d6" stroke-width="1"/><path d="M1.3 8.5 L6.5 8.5 L8.3 6.5 L15.3 6.5" fill="none" stroke="#c99560" stroke-width="0.7" opacity=".7"/></svg>
<span class="t" style="left:56.4px;top:415.70px;font-size:13px;line-height:18px;color:#000;letter-spacing:0.555px;">Mérito</span>
<svg class="ab" style="left:-4px;top:437px" width="16" height="16"><rect x="0.5" y="0.5" width="14" height="14" rx="2.5" fill="#fff" stroke="#3a3a3a"/><rect x="4" y="6.5" width="7" height="2" fill="#3c3c3c"/><rect x="6.5" y="4" width="2" height="7" fill="#3c3c3c"/></svg>
<div style="left:11px;top:444px;width:5px;height:1px;background:repeating-linear-gradient(to right,#666 0 1px,transparent 1px 2px);"></div>
<svg class="ab" style="left:15.5px;top:435.6px" width="17" height="16"><defs><linearGradient id="fg" x1="0" y1="0" x2="0" y2="1"><stop offset="0" stop-color="#f6d6b4"/><stop offset="1" stop-color="#d39c62"/></linearGradient></defs><path d="M1 2.2 Q1 0.8 2.4 0.8 L6 0.8 Q7 0.8 7.6 2 L8 2.6 L14.6 2.6 Q15.6 2.6 15.6 3.6 L15.6 13.6 Q15.6 14.6 14.6 14.6 L2 14.6 Q1 14.6 1 13.6 Z" fill="url(#fg)" stroke="#c08a55" stroke-width="0.9"/><path d="M1.3 7.6 L6.2 7.6 L8 5.6 L15.3 5.6" fill="none" stroke="#fbe9d6" stroke-width="1"/><path d="M1.3 8.5 L6.5 8.5 L8.3 6.5 L15.3 6.5" fill="none" stroke="#c99560" stroke-width="0.7" opacity=".7"/></svg>
<span class="t" style="left:36.4px;top:435.70px;font-size:13px;line-height:18px;color:#000;letter-spacing:0.059px;">Autorizações</span>
<svg class="ab" style="left:-4px;top:457px" width="16" height="16"><rect x="0.5" y="0.5" width="14" height="14" rx="2.5" fill="#fff" stroke="#3a3a3a"/><rect x="4" y="6.5" width="7" height="2" fill="#3c3c3c"/><rect x="6.5" y="4" width="2" height="7" fill="#3c3c3c"/></svg>
<div style="left:11px;top:464px;width:5px;height:1px;background:repeating-linear-gradient(to right,#666 0 1px,transparent 1px 2px);"></div>
<svg class="ab" style="left:15.5px;top:455.6px" width="17" height="16"><defs><linearGradient id="fg" x1="0" y1="0" x2="0" y2="1"><stop offset="0" stop-color="#f6d6b4"/><stop offset="1" stop-color="#d39c62"/></linearGradient></defs><path d="M1 2.2 Q1 0.8 2.4 0.8 L6 0.8 Q7 0.8 7.6 2 L8 2.6 L14.6 2.6 Q15.6 2.6 15.6 3.6 L15.6 13.6 Q15.6 14.6 14.6 14.6 L2 14.6 Q1 14.6 1 13.6 Z" fill="url(#fg)" stroke="#c08a55" stroke-width="0.9"/><path d="M1.3 7.6 L6.2 7.6 L8 5.6 L15.3 5.6" fill="none" stroke="#fbe9d6" stroke-width="1"/><path d="M1.3 8.5 L6.5 8.5 L8.3 6.5 L15.3 6.5" fill="none" stroke="#c99560" stroke-width="0.7" opacity=".7"/></svg>
<span class="t" style="left:36.4px;top:455.70px;font-size:13px;line-height:18px;color:#000;letter-spacing:0.010px;">Cadastros Diversos</span>
<svg class="ab" style="left:-4px;top:477px" width="16" height="16"><rect x="0.5" y="0.5" width="14" height="14" rx="2.5" fill="#fff" stroke="#3a3a3a"/><rect x="4" y="6.5" width="7" height="2" fill="#3c3c3c"/><rect x="6.5" y="4" width="2" height="7" fill="#3c3c3c"/></svg>
<div style="left:11px;top:484px;width:5px;height:1px;background:repeating-linear-gradient(to right,#666 0 1px,transparent 1px 2px);"></div>
<svg class="ab" style="left:15.5px;top:475.6px" width="17" height="16"><defs><linearGradient id="fg" x1="0" y1="0" x2="0" y2="1"><stop offset="0" stop-color="#f6d6b4"/><stop offset="1" stop-color="#d39c62"/></linearGradient></defs><path d="M1 2.2 Q1 0.8 2.4 0.8 L6 0.8 Q7 0.8 7.6 2 L8 2.6 L14.6 2.6 Q15.6 2.6 15.6 3.6 L15.6 13.6 Q15.6 14.6 14.6 14.6 L2 14.6 Q1 14.6 1 13.6 Z" fill="url(#fg)" stroke="#c08a55" stroke-width="0.9"/><path d="M1.3 7.6 L6.2 7.6 L8 5.6 L15.3 5.6" fill="none" stroke="#fbe9d6" stroke-width="1"/><path d="M1.3 8.5 L6.5 8.5 L8.3 6.5 L15.3 6.5" fill="none" stroke="#c99560" stroke-width="0.7" opacity=".7"/></svg>
<span class="t" style="left:36.4px;top:475.70px;font-size:13px;line-height:18px;color:#000;letter-spacing:0.050px;">Estoque/Produtos/Movimento</span>
<svg class="ab" style="left:-4px;top:497px" width="16" height="16"><rect x="0.5" y="0.5" width="14" height="14" rx="2.5" fill="#fff" stroke="#3a3a3a"/><rect x="4" y="6.5" width="7" height="2" fill="#3c3c3c"/><rect x="6.5" y="4" width="2" height="7" fill="#3c3c3c"/></svg>
<div style="left:11px;top:504px;width:5px;height:1px;background:repeating-linear-gradient(to right,#666 0 1px,transparent 1px 2px);"></div>
<svg class="ab" style="left:15.5px;top:495.6px" width="17" height="16"><defs><linearGradient id="fg" x1="0" y1="0" x2="0" y2="1"><stop offset="0" stop-color="#f6d6b4"/><stop offset="1" stop-color="#d39c62"/></linearGradient></defs><path d="M1 2.2 Q1 0.8 2.4 0.8 L6 0.8 Q7 0.8 7.6 2 L8 2.6 L14.6 2.6 Q15.6 2.6 15.6 3.6 L15.6 13.6 Q15.6 14.6 14.6 14.6 L2 14.6 Q1 14.6 1 13.6 Z" fill="url(#fg)" stroke="#c08a55" stroke-width="0.9"/><path d="M1.3 7.6 L6.2 7.6 L8 5.6 L15.3 5.6" fill="none" stroke="#fbe9d6" stroke-width="1"/><path d="M1.3 8.5 L6.5 8.5 L8.3 6.5 L15.3 6.5" fill="none" stroke="#c99560" stroke-width="0.7" opacity=".7"/></svg>
<span class="t" style="left:36.4px;top:495.70px;font-size:13px;line-height:18px;color:#000;letter-spacing:0.050px;">Contabilidade/Tabelas</span>
<svg class="ab" style="left:-4px;top:517px" width="16" height="16"><rect x="0.5" y="0.5" width="14" height="14" rx="2.5" fill="#fff" stroke="#3a3a3a"/><rect x="4" y="6.5" width="7" height="2" fill="#3c3c3c"/></svg>
<div style="left:11px;top:524px;width:5px;height:1px;background:repeating-linear-gradient(to right,#666 0 1px,transparent 1px 2px);"></div>
<svg class="ab" style="left:15.5px;top:515.6px" width="17" height="16"><defs><linearGradient id="fg" x1="0" y1="0" x2="0" y2="1"><stop offset="0" stop-color="#f6d6b4"/><stop offset="1" stop-color="#d39c62"/></linearGradient></defs><path d="M1 2.2 Q1 0.8 2.4 0.8 L6 0.8 Q7 0.8 7.6 2 L8 2.6 L14.6 2.6 Q15.6 2.6 15.6 3.6 L15.6 13.6 Q15.6 14.6 14.6 14.6 L2 14.6 Q1 14.6 1 13.6 Z" fill="url(#fg)" stroke="#c08a55" stroke-width="0.9"/><path d="M1.3 7.6 L6.2 7.6 L8 5.6 L15.3 5.6" fill="none" stroke="#fbe9d6" stroke-width="1"/><path d="M1.3 8.5 L6.5 8.5 L8.3 6.5 L15.3 6.5" fill="none" stroke="#c99560" stroke-width="0.7" opacity=".7"/></svg>
<span class="t" style="left:36.4px;top:515.70px;font-size:13px;line-height:18px;color:#000;letter-spacing:0.050px;">Financeiro/Faturamento</span>
<div style="left:23px;top:544px;width:12px;height:1px;background:repeating-linear-gradient(to right,#666 0 1px,transparent 1px 2px);"></div>
<svg class="ab" style="left:37px;top:537px" width="15" height="14"><rect x="0" y="0" width="1" height="1" fill="#2ca02c"/><rect x="2.3" y="0" width="11.7" height="1" fill="#a9bfd6" opacity="0.95"/><rect x="2.3" y="1" width="11.7" height="1" fill="#dfe7ee"/><rect x="0" y="2" width="1" height="1" fill="#2ca02c"/><rect x="2.3" y="2" width="11.7" height="1" fill="#a9bfd6" opacity="0.9099999999999999"/><rect x="2.3" y="3" width="11.7" height="1" fill="#dfe7ee"/><rect x="0" y="4" width="1" height="1" fill="#2ca02c"/><rect x="2.3" y="4" width="11.7" height="1" fill="#a9bfd6" opacity="0.87"/><rect x="2.3" y="5" width="11.7" height="1" fill="#dfe7ee"/><rect x="0" y="6" width="1" height="1" fill="#2ca02c"/><rect x="2.3" y="6" width="11.7" height="1" fill="#a9bfd6" opacity="0.83"/><rect x="2.3" y="7" width="11.7" height="1" fill="#dfe7ee"/><rect x="0" y="8" width="1" height="1" fill="#2ca02c"/><rect x="2.3" y="8" width="11.7" height="1" fill="#a9bfd6" opacity="0.7899999999999999"/><rect x="2.3" y="9" width="11.7" height="1" fill="#dfe7ee"/><rect x="0" y="10" width="1" height="1" fill="#2ca02c"/><rect x="2.3" y="10" width="11.7" height="1" fill="#a9bfd6" opacity="0.75"/><rect x="2.3" y="11" width="11.7" height="1" fill="#dfe7ee"/><rect x="0" y="12" width="1" height="1" fill="#2ca02c"/><rect x="2.3" y="12" width="11.7" height="1" fill="#a9bfd6" opacity="0.71"/><rect x="2.3" y="13" width="11.7" height="1" fill="#dfe7ee"/></svg>
<span class="t" style="left:56.4px;top:535.70px;font-size:13px;line-height:18px;color:#000;letter-spacing:0.050px;">Gestão Cartas Frete</span>
<div style="left:23px;top:564px;width:12px;height:1px;background:repeating-linear-gradient(to right,#666 0 1px,transparent 1px 2px);"></div>
<svg class="ab" style="left:37px;top:557px" width="15" height="14"><rect x="0" y="0" width="1" height="1" fill="#2ca02c"/><rect x="2.3" y="0" width="11.7" height="1" fill="#a9bfd6" opacity="0.95"/><rect x="2.3" y="1" width="11.7" height="1" fill="#dfe7ee"/><rect x="0" y="2" width="1" height="1" fill="#2ca02c"/><rect x="2.3" y="2" width="11.7" height="1" fill="#a9bfd6" opacity="0.9099999999999999"/><rect x="2.3" y="3" width="11.7" height="1" fill="#dfe7ee"/><rect x="0" y="4" width="1" height="1" fill="#2ca02c"/><rect x="2.3" y="4" width="11.7" height="1" fill="#a9bfd6" opacity="0.87"/><rect x="2.3" y="5" width="11.7" height="1" fill="#dfe7ee"/><rect x="0" y="6" width="1" height="1" fill="#2ca02c"/><rect x="2.3" y="6" width="11.7" height="1" fill="#a9bfd6" opacity="0.83"/><rect x="2.3" y="7" width="11.7" height="1" fill="#dfe7ee"/><rect x="0" y="8" width="1" height="1" fill="#2ca02c"/><rect x="2.3" y="8" width="11.7" height="1" fill="#a9bfd6" opacity="0.7899999999999999"/><rect x="2.3" y="9" width="11.7" height="1" fill="#dfe7ee"/><rect x="0" y="10" width="1" height="1" fill="#2ca02c"/><rect x="2.3" y="10" width="11.7" height="1" fill="#a9bfd6" opacity="0.75"/><rect x="2.3" y="11" width="11.7" height="1" fill="#dfe7ee"/><rect x="0" y="12" width="1" height="1" fill="#2ca02c"/><rect x="2.3" y="12" width="11.7" height="1" fill="#a9bfd6" opacity="0.71"/><rect x="2.3" y="13" width="11.7" height="1" fill="#dfe7ee"/></svg>
<span class="t" style="left:56.4px;top:555.70px;font-size:13px;line-height:18px;color:#000;letter-spacing:-0.034px;">Gestão Cartões</span>
<div style="left:23px;top:584px;width:12px;height:1px;background:repeating-linear-gradient(to right,#666 0 1px,transparent 1px 2px);"></div>
<svg class="ab" style="left:37px;top:577px" width="15" height="14"><rect x="0" y="0" width="1" height="1" fill="#2ca02c"/><rect x="2.3" y="0" width="11.7" height="1" fill="#a9bfd6" opacity="0.95"/><rect x="2.3" y="1" width="11.7" height="1" fill="#dfe7ee"/><rect x="0" y="2" width="1" height="1" fill="#2ca02c"/><rect x="2.3" y="2" width="11.7" height="1" fill="#a9bfd6" opacity="0.9099999999999999"/><rect x="2.3" y="3" width="11.7" height="1" fill="#dfe7ee"/><rect x="0" y="4" width="1" height="1" fill="#2ca02c"/><rect x="2.3" y="4" width="11.7" height="1" fill="#a9bfd6" opacity="0.87"/><rect x="2.3" y="5" width="11.7" height="1" fill="#dfe7ee"/><rect x="0" y="6" width="1" height="1" fill="#2ca02c"/><rect x="2.3" y="6" width="11.7" height="1" fill="#a9bfd6" opacity="0.83"/><rect x="2.3" y="7" width="11.7" height="1" fill="#dfe7ee"/><rect x="0" y="8" width="1" height="1" fill="#2ca02c"/><rect x="2.3" y="8" width="11.7" height="1" fill="#a9bfd6" opacity="0.7899999999999999"/><rect x="2.3" y="9" width="11.7" height="1" fill="#dfe7ee"/><rect x="0" y="10" width="1" height="1" fill="#2ca02c"/><rect x="2.3" y="10" width="11.7" height="1" fill="#a9bfd6" opacity="0.75"/><rect x="2.3" y="11" width="11.7" height="1" fill="#dfe7ee"/><rect x="0" y="12" width="1" height="1" fill="#2ca02c"/><rect x="2.3" y="12" width="11.7" height="1" fill="#a9bfd6" opacity="0.71"/><rect x="2.3" y="13" width="11.7" height="1" fill="#dfe7ee"/></svg>
<span class="t" style="left:56.4px;top:575.70px;font-size:13px;line-height:18px;color:#000;letter-spacing:0.050px;">Gestão Cheque Recebido</span>
<div style="left:23px;top:604px;width:12px;height:1px;background:repeating-linear-gradient(to right,#666 0 1px,transparent 1px 2px);"></div>
<svg class="ab" style="left:37px;top:597px" width="15" height="14"><rect x="0" y="0" width="1" height="1" fill="#2ca02c"/><rect x="2.3" y="0" width="11.7" height="1" fill="#a9bfd6" opacity="0.95"/><rect x="2.3" y="1" width="11.7" height="1" fill="#dfe7ee"/><rect x="0" y="2" width="1" height="1" fill="#2ca02c"/><rect x="2.3" y="2" width="11.7" height="1" fill="#a9bfd6" opacity="0.9099999999999999"/><rect x="2.3" y="3" width="11.7" height="1" fill="#dfe7ee"/><rect x="0" y="4" width="1" height="1" fill="#2ca02c"/><rect x="2.3" y="4" width="11.7" height="1" fill="#a9bfd6" opacity="0.87"/><rect x="2.3" y="5" width="11.7" height="1" fill="#dfe7ee"/><rect x="0" y="6" width="1" height="1" fill="#2ca02c"/><rect x="2.3" y="6" width="11.7" height="1" fill="#a9bfd6" opacity="0.83"/><rect x="2.3" y="7" width="11.7" height="1" fill="#dfe7ee"/><rect x="0" y="8" width="1" height="1" fill="#2ca02c"/><rect x="2.3" y="8" width="11.7" height="1" fill="#a9bfd6" opacity="0.7899999999999999"/><rect x="2.3" y="9" width="11.7" height="1" fill="#dfe7ee"/><rect x="0" y="10" width="1" height="1" fill="#2ca02c"/><rect x="2.3" y="10" width="11.7" height="1" fill="#a9bfd6" opacity="0.75"/><rect x="2.3" y="11" width="11.7" height="1" fill="#dfe7ee"/><rect x="0" y="12" width="1" height="1" fill="#2ca02c"/><rect x="2.3" y="12" width="11.7" height="1" fill="#a9bfd6" opacity="0.71"/><rect x="2.3" y="13" width="11.7" height="1" fill="#dfe7ee"/></svg>
<span class="t" style="left:56.4px;top:595.70px;font-size:13px;line-height:18px;color:#000;letter-spacing:0.050px;">Gestão Cheque Terceiro</span>
<div style="left:23px;top:624px;width:12px;height:1px;background:repeating-linear-gradient(to right,#666 0 1px,transparent 1px 2px);"></div>
<svg class="ab" style="left:37px;top:617px" width="15" height="14"><rect x="0" y="0" width="1" height="1" fill="#2ca02c"/><rect x="2.3" y="0" width="11.7" height="1" fill="#a9bfd6" opacity="0.95"/><rect x="2.3" y="1" width="11.7" height="1" fill="#dfe7ee"/><rect x="0" y="2" width="1" height="1" fill="#2ca02c"/><rect x="2.3" y="2" width="11.7" height="1" fill="#a9bfd6" opacity="0.9099999999999999"/><rect x="2.3" y="3" width="11.7" height="1" fill="#dfe7ee"/><rect x="0" y="4" width="1" height="1" fill="#2ca02c"/><rect x="2.3" y="4" width="11.7" height="1" fill="#a9bfd6" opacity="0.87"/><rect x="2.3" y="5" width="11.7" height="1" fill="#dfe7ee"/><rect x="0" y="6" width="1" height="1" fill="#2ca02c"/><rect x="2.3" y="6" width="11.7" height="1" fill="#a9bfd6" opacity="0.83"/><rect x="2.3" y="7" width="11.7" height="1" fill="#dfe7ee"/><rect x="0" y="8" width="1" height="1" fill="#2ca02c"/><rect x="2.3" y="8" width="11.7" height="1" fill="#a9bfd6" opacity="0.7899999999999999"/><rect x="2.3" y="9" width="11.7" height="1" fill="#dfe7ee"/><rect x="0" y="10" width="1" height="1" fill="#2ca02c"/><rect x="2.3" y="10" width="11.7" height="1" fill="#a9bfd6" opacity="0.75"/><rect x="2.3" y="11" width="11.7" height="1" fill="#dfe7ee"/><rect x="0" y="12" width="1" height="1" fill="#2ca02c"/><rect x="2.3" y="12" width="11.7" height="1" fill="#a9bfd6" opacity="0.71"/><rect x="2.3" y="13" width="11.7" height="1" fill="#dfe7ee"/></svg>
<span class="t" style="left:56.4px;top:615.70px;font-size:13px;line-height:18px;color:#000;letter-spacing:0.050px;">Gestão Cobrança</span>
<div style="left:23px;top:644px;width:12px;height:1px;background:repeating-linear-gradient(to right,#666 0 1px,transparent 1px 2px);"></div>
<svg class="ab" style="left:37px;top:637px" width="15" height="14"><rect x="0" y="0" width="1" height="1" fill="#2ca02c"/><rect x="2.3" y="0" width="11.7" height="1" fill="#a9bfd6" opacity="0.95"/><rect x="2.3" y="1" width="11.7" height="1" fill="#dfe7ee"/><rect x="0" y="2" width="1" height="1" fill="#2ca02c"/><rect x="2.3" y="2" width="11.7" height="1" fill="#a9bfd6" opacity="0.9099999999999999"/><rect x="2.3" y="3" width="11.7" height="1" fill="#dfe7ee"/><rect x="0" y="4" width="1" height="1" fill="#2ca02c"/><rect x="2.3" y="4" width="11.7" height="1" fill="#a9bfd6" opacity="0.87"/><rect x="2.3" y="5" width="11.7" height="1" fill="#dfe7ee"/><rect x="0" y="6" width="1" height="1" fill="#2ca02c"/><rect x="2.3" y="6" width="11.7" height="1" fill="#a9bfd6" opacity="0.83"/><rect x="2.3" y="7" width="11.7" height="1" fill="#dfe7ee"/><rect x="0" y="8" width="1" height="1" fill="#2ca02c"/><rect x="2.3" y="8" width="11.7" height="1" fill="#a9bfd6" opacity="0.7899999999999999"/><rect x="2.3" y="9" width="11.7" height="1" fill="#dfe7ee"/><rect x="0" y="10" width="1" height="1" fill="#2ca02c"/><rect x="2.3" y="10" width="11.7" height="1" fill="#a9bfd6" opacity="0.75"/><rect x="2.3" y="11" width="11.7" height="1" fill="#dfe7ee"/><rect x="0" y="12" width="1" height="1" fill="#2ca02c"/><rect x="2.3" y="12" width="11.7" height="1" fill="#a9bfd6" opacity="0.71"/><rect x="2.3" y="13" width="11.7" height="1" fill="#dfe7ee"/></svg>
<span class="t" style="left:56.4px;top:635.70px;font-size:13px;line-height:18px;color:#000;letter-spacing:0.050px;">Gestão Contas a Receber</span>
<div style="left:23px;top:664px;width:12px;height:1px;background:repeating-linear-gradient(to right,#666 0 1px,transparent 1px 2px);"></div>
<svg class="ab" style="left:37px;top:657px" width="15" height="14"><rect x="0" y="0" width="1" height="1" fill="#2ca02c"/><rect x="2.3" y="0" width="11.7" height="1" fill="#a9bfd6" opacity="0.95"/><rect x="2.3" y="1" width="11.7" height="1" fill="#dfe7ee"/><rect x="0" y="2" width="1" height="1" fill="#2ca02c"/><rect x="2.3" y="2" width="11.7" height="1" fill="#a9bfd6" opacity="0.9099999999999999"/><rect x="2.3" y="3" width="11.7" height="1" fill="#dfe7ee"/><rect x="0" y="4" width="1" height="1" fill="#2ca02c"/><rect x="2.3" y="4" width="11.7" height="1" fill="#a9bfd6" opacity="0.87"/><rect x="2.3" y="5" width="11.7" height="1" fill="#dfe7ee"/><rect x="0" y="6" width="1" height="1" fill="#2ca02c"/><rect x="2.3" y="6" width="11.7" height="1" fill="#a9bfd6" opacity="0.83"/><rect x="2.3" y="7" width="11.7" height="1" fill="#dfe7ee"/><rect x="0" y="8" width="1" height="1" fill="#2ca02c"/><rect x="2.3" y="8" width="11.7" height="1" fill="#a9bfd6" opacity="0.7899999999999999"/><rect x="2.3" y="9" width="11.7" height="1" fill="#dfe7ee"/><rect x="0" y="10" width="1" height="1" fill="#2ca02c"/><rect x="2.3" y="10" width="11.7" height="1" fill="#a9bfd6" opacity="0.75"/><rect x="2.3" y="11" width="11.7" height="1" fill="#dfe7ee"/><rect x="0" y="12" width="1" height="1" fill="#2ca02c"/><rect x="2.3" y="12" width="11.7" height="1" fill="#a9bfd6" opacity="0.71"/><rect x="2.3" y="13" width="11.7" height="1" fill="#dfe7ee"/></svg>
<span class="t" style="left:56.4px;top:655.70px;font-size:13px;line-height:18px;color:#000;letter-spacing:0.050px;">Gestão Empréstimo</span>
<div style="left:23px;top:684px;width:12px;height:1px;background:repeating-linear-gradient(to right,#666 0 1px,transparent 1px 2px);"></div>
<svg class="ab" style="left:37px;top:677px" width="15" height="14"><rect x="0" y="0" width="1" height="1" fill="#2ca02c"/><rect x="2.3" y="0" width="11.7" height="1" fill="#a9bfd6" opacity="0.95"/><rect x="2.3" y="1" width="11.7" height="1" fill="#dfe7ee"/><rect x="0" y="2" width="1" height="1" fill="#2ca02c"/><rect x="2.3" y="2" width="11.7" height="1" fill="#a9bfd6" opacity="0.9099999999999999"/><rect x="2.3" y="3" width="11.7" height="1" fill="#dfe7ee"/><rect x="0" y="4" width="1" height="1" fill="#2ca02c"/><rect x="2.3" y="4" width="11.7" height="1" fill="#a9bfd6" opacity="0.87"/><rect x="2.3" y="5" width="11.7" height="1" fill="#dfe7ee"/><rect x="0" y="6" width="1" height="1" fill="#2ca02c"/><rect x="2.3" y="6" width="11.7" height="1" fill="#a9bfd6" opacity="0.83"/><rect x="2.3" y="7" width="11.7" height="1" fill="#dfe7ee"/><rect x="0" y="8" width="1" height="1" fill="#2ca02c"/><rect x="2.3" y="8" width="11.7" height="1" fill="#a9bfd6" opacity="0.7899999999999999"/><rect x="2.3" y="9" width="11.7" height="1" fill="#dfe7ee"/><rect x="0" y="10" width="1" height="1" fill="#2ca02c"/><rect x="2.3" y="10" width="11.7" height="1" fill="#a9bfd6" opacity="0.75"/><rect x="2.3" y="11" width="11.7" height="1" fill="#dfe7ee"/><rect x="0" y="12" width="1" height="1" fill="#2ca02c"/><rect x="2.3" y="12" width="11.7" height="1" fill="#a9bfd6" opacity="0.71"/><rect x="2.3" y="13" width="11.7" height="1" fill="#dfe7ee"/></svg>
<span class="t" style="left:56.4px;top:675.70px;font-size:13px;line-height:18px;color:#000;letter-spacing:0.050px;">Gestão Faturamento</span>
<div style="left:23px;top:704px;width:12px;height:1px;background:repeating-linear-gradient(to right,#666 0 1px,transparent 1px 2px);"></div>
<svg class="ab" style="left:37px;top:697px" width="15" height="14"><rect x="0" y="0" width="1" height="1" fill="#2ca02c"/><rect x="2.3" y="0" width="11.7" height="1" fill="#a9bfd6" opacity="0.95"/><rect x="2.3" y="1" width="11.7" height="1" fill="#dfe7ee"/><rect x="0" y="2" width="1" height="1" fill="#2ca02c"/><rect x="2.3" y="2" width="11.7" height="1" fill="#a9bfd6" opacity="0.9099999999999999"/><rect x="2.3" y="3" width="11.7" height="1" fill="#dfe7ee"/><rect x="0" y="4" width="1" height="1" fill="#2ca02c"/><rect x="2.3" y="4" width="11.7" height="1" fill="#a9bfd6" opacity="0.87"/><rect x="2.3" y="5" width="11.7" height="1" fill="#dfe7ee"/><rect x="0" y="6" width="1" height="1" fill="#2ca02c"/><rect x="2.3" y="6" width="11.7" height="1" fill="#a9bfd6" opacity="0.83"/><rect x="2.3" y="7" width="11.7" height="1" fill="#dfe7ee"/><rect x="0" y="8" width="1" height="1" fill="#2ca02c"/><rect x="2.3" y="8" width="11.7" height="1" fill="#a9bfd6" opacity="0.7899999999999999"/><rect x="2.3" y="9" width="11.7" height="1" fill="#dfe7ee"/><rect x="0" y="10" width="1" height="1" fill="#2ca02c"/><rect x="2.3" y="10" width="11.7" height="1" fill="#a9bfd6" opacity="0.75"/><rect x="2.3" y="11" width="11.7" height="1" fill="#dfe7ee"/><rect x="0" y="12" width="1" height="1" fill="#2ca02c"/><rect x="2.3" y="12" width="11.7" height="1" fill="#a9bfd6" opacity="0.71"/><rect x="2.3" y="13" width="11.7" height="1" fill="#dfe7ee"/></svg>
<span class="t" style="left:56.4px;top:695.70px;font-size:13px;line-height:18px;color:#000;letter-spacing:0.050px;">Gestão Plataforma</span>
<div style="left:23px;top:724px;width:12px;height:1px;background:repeating-linear-gradient(to right,#666 0 1px,transparent 1px 2px);"></div>
<svg class="ab" style="left:37px;top:717px" width="15" height="14"><rect x="0" y="0" width="1" height="1" fill="#2ca02c"/><rect x="2.3" y="0" width="11.7" height="1" fill="#a9bfd6" opacity="0.95"/><rect x="2.3" y="1" width="11.7" height="1" fill="#dfe7ee"/><rect x="0" y="2" width="1" height="1" fill="#2ca02c"/><rect x="2.3" y="2" width="11.7" height="1" fill="#a9bfd6" opacity="0.9099999999999999"/><rect x="2.3" y="3" width="11.7" height="1" fill="#dfe7ee"/><rect x="0" y="4" width="1" height="1" fill="#2ca02c"/><rect x="2.3" y="4" width="11.7" height="1" fill="#a9bfd6" opacity="0.87"/><rect x="2.3" y="5" width="11.7" height="1" fill="#dfe7ee"/><rect x="0" y="6" width="1" height="1" fill="#2ca02c"/><rect x="2.3" y="6" width="11.7" height="1" fill="#a9bfd6" opacity="0.83"/><rect x="2.3" y="7" width="11.7" height="1" fill="#dfe7ee"/><rect x="0" y="8" width="1" height="1" fill="#2ca02c"/><rect x="2.3" y="8" width="11.7" height="1" fill="#a9bfd6" opacity="0.7899999999999999"/><rect x="2.3" y="9" width="11.7" height="1" fill="#dfe7ee"/><rect x="0" y="10" width="1" height="1" fill="#2ca02c"/><rect x="2.3" y="10" width="11.7" height="1" fill="#a9bfd6" opacity="0.75"/><rect x="2.3" y="11" width="11.7" height="1" fill="#dfe7ee"/><rect x="0" y="12" width="1" height="1" fill="#2ca02c"/><rect x="2.3" y="12" width="11.7" height="1" fill="#a9bfd6" opacity="0.71"/><rect x="2.3" y="13" width="11.7" height="1" fill="#dfe7ee"/></svg>
<span class="t" style="left:56.4px;top:715.70px;font-size:13px;line-height:18px;color:#000;letter-spacing:0.166px;">Livro Eletrônico</span>
<svg class="ab" style="left:16px;top:737px" width="16" height="16"><rect x="0.5" y="0.5" width="14" height="14" rx="2.5" fill="#fff" stroke="#3a3a3a"/><rect x="4" y="6.5" width="7" height="2" fill="#3c3c3c"/><rect x="6.5" y="4" width="2" height="7" fill="#3c3c3c"/></svg>
<div style="left:31px;top:744px;width:5px;height:1px;background:repeating-linear-gradient(to right,#666 0 1px,transparent 1px 2px);"></div>
<svg class="ab" style="left:35.5px;top:735.6px" width="17" height="16"><defs><linearGradient id="fg" x1="0" y1="0" x2="0" y2="1"><stop offset="0" stop-color="#f6d6b4"/><stop offset="1" stop-color="#d39c62"/></linearGradient></defs><path d="M1 2.2 Q1 0.8 2.4 0.8 L6 0.8 Q7 0.8 7.6 2 L8 2.6 L14.6 2.6 Q15.6 2.6 15.6 3.6 L15.6 13.6 Q15.6 14.6 14.6 14.6 L2 14.6 Q1 14.6 1 13.6 Z" fill="url(#fg)" stroke="#c08a55" stroke-width="0.9"/><path d="M1.3 7.6 L6.2 7.6 L8 5.6 L15.3 5.6" fill="none" stroke="#fbe9d6" stroke-width="1"/><path d="M1.3 8.5 L6.5 8.5 L8.3 6.5 L15.3 6.5" fill="none" stroke="#c99560" stroke-width="0.7" opacity=".7"/></svg>
<span class="t" style="left:56.4px;top:735.70px;font-size:13px;line-height:18px;color:#000;letter-spacing:-0.097px;">Caixa Central</span>
<svg class="ab" style="left:16px;top:757px" width="16" height="16"><rect x="0.5" y="0.5" width="14" height="14" rx="2.5" fill="#fff" stroke="#3a3a3a"/><rect x="4" y="6.5" width="7" height="2" fill="#3c3c3c"/><rect x="6.5" y="4" width="2" height="7" fill="#3c3c3c"/></svg>
<div style="left:31px;top:764px;width:5px;height:1px;background:repeating-linear-gradient(to right,#666 0 1px,transparent 1px 2px);"></div>
<svg class="ab" style="left:35.5px;top:755.6px" width="17" height="16"><defs><linearGradient id="fg" x1="0" y1="0" x2="0" y2="1"><stop offset="0" stop-color="#f6d6b4"/><stop offset="1" stop-color="#d39c62"/></linearGradient></defs><path d="M1 2.2 Q1 0.8 2.4 0.8 L6 0.8 Q7 0.8 7.6 2 L8 2.6 L14.6 2.6 Q15.6 2.6 15.6 3.6 L15.6 13.6 Q15.6 14.6 14.6 14.6 L2 14.6 Q1 14.6 1 13.6 Z" fill="url(#fg)" stroke="#c08a55" stroke-width="0.9"/><path d="M1.3 7.6 L6.2 7.6 L8 5.6 L15.3 5.6" fill="none" stroke="#fbe9d6" stroke-width="1"/><path d="M1.3 8.5 L6.5 8.5 L8.3 6.5 L15.3 6.5" fill="none" stroke="#c99560" stroke-width="0.7" opacity=".7"/></svg>
<span class="t" style="left:56.4px;top:755.70px;font-size:13px;line-height:18px;color:#000;letter-spacing:-0.091px;">Cheques</span>
<svg class="ab" style="left:16px;top:777px" width="16" height="16"><rect x="0.5" y="0.5" width="14" height="14" rx="2.5" fill="#fff" stroke="#3a3a3a"/><rect x="4" y="6.5" width="7" height="2" fill="#3c3c3c"/></svg>
<div style="left:31px;top:784px;width:5px;height:1px;background:repeating-linear-gradient(to right,#666 0 1px,transparent 1px 2px);"></div>
<svg class="ab" style="left:35.5px;top:775.6px" width="17" height="16"><defs><linearGradient id="fg" x1="0" y1="0" x2="0" y2="1"><stop offset="0" stop-color="#f6d6b4"/><stop offset="1" stop-color="#d39c62"/></linearGradient></defs><path d="M1 2.2 Q1 0.8 2.4 0.8 L6 0.8 Q7 0.8 7.6 2 L8 2.6 L14.6 2.6 Q15.6 2.6 15.6 3.6 L15.6 13.6 Q15.6 14.6 14.6 14.6 L2 14.6 Q1 14.6 1 13.6 Z" fill="url(#fg)" stroke="#c08a55" stroke-width="0.9"/><path d="M1.3 7.6 L6.2 7.6 L8 5.6 L15.3 5.6" fill="none" stroke="#fbe9d6" stroke-width="1"/><path d="M1.3 8.5 L6.5 8.5 L8.3 6.5 L15.3 6.5" fill="none" stroke="#c99560" stroke-width="0.7" opacity=".7"/></svg>
<span class="t" style="left:56.4px;top:775.70px;font-size:13px;line-height:18px;color:#000;letter-spacing:0.036px;">Cadastro</span>
<svg class="ab" style="left:36px;top:797px" width="16" height="16"><rect x="0.5" y="0.5" width="14" height="14" rx="2.5" fill="#fff" stroke="#3a3a3a"/><rect x="4" y="6.5" width="7" height="2" fill="#3c3c3c"/><rect x="6.5" y="4" width="2" height="7" fill="#3c3c3c"/></svg>
<div style="left:51px;top:804px;width:5px;height:1px;background:repeating-linear-gradient(to right,#666 0 1px,transparent 1px 2px);"></div>
<svg class="ab" style="left:55.5px;top:795.6px" width="17" height="16"><defs><linearGradient id="fg" x1="0" y1="0" x2="0" y2="1"><stop offset="0" stop-color="#f6d6b4"/><stop offset="1" stop-color="#d39c62"/></linearGradient></defs><path d="M1 2.2 Q1 0.8 2.4 0.8 L6 0.8 Q7 0.8 7.6 2 L8 2.6 L14.6 2.6 Q15.6 2.6 15.6 3.6 L15.6 13.6 Q15.6 14.6 14.6 14.6 L2 14.6 Q1 14.6 1 13.6 Z" fill="url(#fg)" stroke="#c08a55" stroke-width="0.9"/><path d="M1.3 7.6 L6.2 7.6 L8 5.6 L15.3 5.6" fill="none" stroke="#fbe9d6" stroke-width="1"/><path d="M1.3 8.5 L6.5 8.5 L8.3 6.5 L15.3 6.5" fill="none" stroke="#c99560" stroke-width="0.7" opacity=".7"/></svg>
<span class="t" style="left:76.4px;top:795.70px;font-size:13px;line-height:18px;color:#000;letter-spacing:0.050px;">Cobrança Bancária</span>
<div style="left:43px;top:824px;width:12px;height:1px;background:repeating-linear-gradient(to right,#666 0 1px,transparent 1px 2px);"></div>
<svg class="ab" style="left:57px;top:817px" width="15" height="14"><rect x="0" y="0" width="1" height="1" fill="#2ca02c"/><rect x="2.3" y="0" width="11.7" height="1" fill="#a9bfd6" opacity="0.95"/><rect x="2.3" y="1" width="11.7" height="1" fill="#dfe7ee"/><rect x="0" y="2" width="1" height="1" fill="#2ca02c"/><rect x="2.3" y="2" width="11.7" height="1" fill="#a9bfd6" opacity="0.9099999999999999"/><rect x="2.3" y="3" width="11.7" height="1" fill="#dfe7ee"/><rect x="0" y="4" width="1" height="1" fill="#2ca02c"/><rect x="2.3" y="4" width="11.7" height="1" fill="#a9bfd6" opacity="0.87"/><rect x="2.3" y="5" width="11.7" height="1" fill="#dfe7ee"/><rect x="0" y="6" width="1" height="1" fill="#2ca02c"/><rect x="2.3" y="6" width="11.7" height="1" fill="#a9bfd6" opacity="0.83"/><rect x="2.3" y="7" width="11.7" height="1" fill="#dfe7ee"/><rect x="0" y="8" width="1" height="1" fill="#2ca02c"/><rect x="2.3" y="8" width="11.7" height="1" fill="#a9bfd6" opacity="0.7899999999999999"/><rect x="2.3" y="9" width="11.7" height="1" fill="#dfe7ee"/><rect x="0" y="10" width="1" height="1" fill="#2ca02c"/><rect x="2.3" y="10" width="11.7" height="1" fill="#a9bfd6" opacity="0.75"/><rect x="2.3" y="11" width="11.7" height="1" fill="#dfe7ee"/><rect x="0" y="12" width="1" height="1" fill="#2ca02c"/><rect x="2.3" y="12" width="11.7" height="1" fill="#a9bfd6" opacity="0.71"/><rect x="2.3" y="13" width="11.7" height="1" fill="#dfe7ee"/></svg>
<span class="t" style="left:76.4px;top:815.70px;font-size:13px;line-height:18px;color:#000;letter-spacing:0.050px;">Ajustes Cadastro Banco</span>
<div style="left:43px;top:844px;width:12px;height:1px;background:repeating-linear-gradient(to right,#666 0 1px,transparent 1px 2px);"></div>
<svg class="ab" style="left:57px;top:837px" width="15" height="14"><rect x="0" y="0" width="1" height="1" fill="#2ca02c"/><rect x="2.3" y="0" width="11.7" height="1" fill="#a9bfd6" opacity="0.95"/><rect x="2.3" y="1" width="11.7" height="1" fill="#dfe7ee"/><rect x="0" y="2" width="1" height="1" fill="#2ca02c"/><rect x="2.3" y="2" width="11.7" height="1" fill="#a9bfd6" opacity="0.9099999999999999"/><rect x="2.3" y="3" width="11.7" height="1" fill="#dfe7ee"/><rect x="0" y="4" width="1" height="1" fill="#2ca02c"/><rect x="2.3" y="4" width="11.7" height="1" fill="#a9bfd6" opacity="0.87"/><rect x="2.3" y="5" width="11.7" height="1" fill="#dfe7ee"/><rect x="0" y="6" width="1" height="1" fill="#2ca02c"/><rect x="2.3" y="6" width="11.7" height="1" fill="#a9bfd6" opacity="0.83"/><rect x="2.3" y="7" width="11.7" height="1" fill="#dfe7ee"/><rect x="0" y="8" width="1" height="1" fill="#2ca02c"/><rect x="2.3" y="8" width="11.7" height="1" fill="#a9bfd6" opacity="0.7899999999999999"/><rect x="2.3" y="9" width="11.7" height="1" fill="#dfe7ee"/><rect x="0" y="10" width="1" height="1" fill="#2ca02c"/><rect x="2.3" y="10" width="11.7" height="1" fill="#a9bfd6" opacity="0.75"/><rect x="2.3" y="11" width="11.7" height="1" fill="#dfe7ee"/><rect x="0" y="12" width="1" height="1" fill="#2ca02c"/><rect x="2.3" y="12" width="11.7" height="1" fill="#a9bfd6" opacity="0.71"/><rect x="2.3" y="13" width="11.7" height="1" fill="#dfe7ee"/></svg>
<span class="t" style="left:76.4px;top:835.70px;font-size:13px;line-height:18px;color:#000;letter-spacing:0.012px;">Ajustes Cadastro Pessoa/Cliente</span>
<div style="left:43px;top:864px;width:12px;height:1px;background:repeating-linear-gradient(to right,#666 0 1px,transparent 1px 2px);"></div>
<svg class="ab" style="left:57px;top:857px" width="15" height="14"><rect x="0" y="0" width="1" height="1" fill="#2ca02c"/><rect x="2.3" y="0" width="11.7" height="1" fill="#a9bfd6" opacity="0.95"/><rect x="2.3" y="1" width="11.7" height="1" fill="#dfe7ee"/><rect x="0" y="2" width="1" height="1" fill="#2ca02c"/><rect x="2.3" y="2" width="11.7" height="1" fill="#a9bfd6" opacity="0.9099999999999999"/><rect x="2.3" y="3" width="11.7" height="1" fill="#dfe7ee"/><rect x="0" y="4" width="1" height="1" fill="#2ca02c"/><rect x="2.3" y="4" width="11.7" height="1" fill="#a9bfd6" opacity="0.87"/><rect x="2.3" y="5" width="11.7" height="1" fill="#dfe7ee"/><rect x="0" y="6" width="1" height="1" fill="#2ca02c"/><rect x="2.3" y="6" width="11.7" height="1" fill="#a9bfd6" opacity="0.83"/><rect x="2.3" y="7" width="11.7" height="1" fill="#dfe7ee"/><rect x="0" y="8" width="1" height="1" fill="#2ca02c"/><rect x="2.3" y="8" width="11.7" height="1" fill="#a9bfd6" opacity="0.7899999999999999"/><rect x="2.3" y="9" width="11.7" height="1" fill="#dfe7ee"/><rect x="0" y="10" width="1" height="1" fill="#2ca02c"/><rect x="2.3" y="10" width="11.7" height="1" fill="#a9bfd6" opacity="0.75"/><rect x="2.3" y="11" width="11.7" height="1" fill="#dfe7ee"/><rect x="0" y="12" width="1" height="1" fill="#2ca02c"/><rect x="2.3" y="12" width="11.7" height="1" fill="#a9bfd6" opacity="0.71"/><rect x="2.3" y="13" width="11.7" height="1" fill="#dfe7ee"/></svg>
<span class="t" style="left:76.4px;top:855.70px;font-size:13px;line-height:18px;color:#000;letter-spacing:-0.053px;">Clientes</span>
<div style="left:43px;top:884px;width:12px;height:1px;background:repeating-linear-gradient(to right,#666 0 1px,transparent 1px 2px);"></div>
<svg class="ab" style="left:57px;top:877px" width="15" height="14"><rect x="0" y="0" width="1" height="1" fill="#2ca02c"/><rect x="2.3" y="0" width="11.7" height="1" fill="#a9bfd6" opacity="0.95"/><rect x="2.3" y="1" width="11.7" height="1" fill="#dfe7ee"/><rect x="0" y="2" width="1" height="1" fill="#2ca02c"/><rect x="2.3" y="2" width="11.7" height="1" fill="#a9bfd6" opacity="0.9099999999999999"/><rect x="2.3" y="3" width="11.7" height="1" fill="#dfe7ee"/><rect x="0" y="4" width="1" height="1" fill="#2ca02c"/><rect x="2.3" y="4" width="11.7" height="1" fill="#a9bfd6" opacity="0.87"/><rect x="2.3" y="5" width="11.7" height="1" fill="#dfe7ee"/><rect x="0" y="6" width="1" height="1" fill="#2ca02c"/><rect x="2.3" y="6" width="11.7" height="1" fill="#a9bfd6" opacity="0.83"/><rect x="2.3" y="7" width="11.7" height="1" fill="#dfe7ee"/><rect x="0" y="8" width="1" height="1" fill="#2ca02c"/><rect x="2.3" y="8" width="11.7" height="1" fill="#a9bfd6" opacity="0.7899999999999999"/><rect x="2.3" y="9" width="11.7" height="1" fill="#dfe7ee"/><rect x="0" y="10" width="1" height="1" fill="#2ca02c"/><rect x="2.3" y="10" width="11.7" height="1" fill="#a9bfd6" opacity="0.75"/><rect x="2.3" y="11" width="11.7" height="1" fill="#dfe7ee"/><rect x="0" y="12" width="1" height="1" fill="#2ca02c"/><rect x="2.3" y="12" width="11.7" height="1" fill="#a9bfd6" opacity="0.71"/><rect x="2.3" y="13" width="11.7" height="1" fill="#dfe7ee"/></svg>
<span class="t" style="left:76.4px;top:875.70px;font-size:13px;line-height:18px;color:#000;letter-spacing:0.050px;">Contas</span>
<div style="left:158px;top:102px;width:1051px;height:743px;border-radius:9px 9px 0 0;background:#fff;box-shadow:0 1px 7px 1px rgba(0,0,0,.55), 0 0 0 0.6px rgba(60,60,60,.55);"></div>
<div style="left:158px;top:102px;width:1051px;height:38px;border-radius:9px 9px 0 0;background:#ebebeb;"></div>
<div style="left:158px;top:139px;width:1051px;height:1px;background:#8f9c97;"></div>
<div style="left:158px;top:140px;width:1051px;height:1px;background:#5e6b66;"></div>
<span class="t" style="left:612.9px;top:109.98px;font-size:14.5px;line-height:20px;color:#333;letter-spacing:-0.120px;font-weight:bold;transform:scaleX(0.9869);transform-origin:0 0;">Cadastro de Unidade</span>
<div style="left:1112px;top:109px;width:22px;height:22px;border-radius:50%;background:#dcdcdc;"></div>
<div style="left:1146px;top:109px;width:22px;height:22px;border-radius:50%;background:#dcdcdc;"></div>
<div style="left:1180px;top:109px;width:22px;height:22px;border-radius:50%;background:#dcdcdc;"></div>
<svg class="ab" style="left:1110px;top:107px" width="96" height="26" fill="none" stroke="#2e2e2e" stroke-width="1.2"><path d="M9 16.5 H17"/><rect x="43.5" y="9.5" width="7" height="7"/><path d="M77 8.5 L85 16.5 M85 8.5 L77 16.5"/></svg>
<div style="left:160px;top:141px;width:1047px;height:26px;background:#c3e1d6;"></div>
<div style="left:158px;top:140px;width:1px;height:28px;background:#84928d;"></div>
<div style="left:159px;top:141px;width:1px;height:26px;background:#5e6b66;"></div>
<div style="left:164.70000000000002px;top:147.9px;width:13.2px;height:13.2px;border-radius:50%;border:1px solid #808080;background:radial-gradient(circle at 45% 40%,#f8f8f8 0%,#f0f0f0 55%,#dedede 100%);"></div>
<div style="left:242.8px;top:147.9px;width:13.2px;height:13.2px;border-radius:50%;border:1px solid #808080;background:radial-gradient(circle at 45% 40%,#f8f8f8 0%,#f0f0f0 55%,#dedede 100%);"></div>
<div style="left:246.9px;top:152px;width:5px;height:5px;border-radius:50%;background:radial-gradient(circle at 40% 40%,#8a8a8a,#4a4a4a);"></div>
<span class="t k" style="left:181.8px;top:146.69px;font-size:11px;line-height:15px;color:#1a1a1a;letter-spacing:0.359px;"><u>I</u>nclusão</span>
<span class="t k" style="left:260.0px;top:146.69px;font-size:11px;line-height:15px;color:#1a1a1a;letter-spacing:0.239px;"><u>A</u>lteração</span>
<span class="t" style="left:328.2px;top:146.69px;font-size:11px;line-height:15px;color:#3a3af2;letter-spacing:-0.120px;font-weight:bold;transform:scaleX(0.9932);transform-origin:0 0;">21 - COML BUFFON COMB E TRANSP LTDA - POSTO 21</span>
<svg class="ab" style="left:1183px;top:144px" width="21" height="20"><defs><linearGradient id="pw" x1="0" y1="0" x2="1" y2="1"><stop offset="0" stop-color="#d4a8a8"/><stop offset=".4" stop-color="#94484a"/><stop offset="1" stop-color="#561a1a"/></linearGradient></defs><rect x="0.5" y="0.5" width="19.5" height="18.5" rx="2" fill="url(#pw)" stroke="#2a1a1a"/><circle cx="10.2" cy="9.6" r="5.2" fill="none" stroke="#fff" stroke-width="1.6"/><path d="M10.2 2.8 V16.6" stroke="#fff" stroke-width="1.5"/></svg>
<svg class="ab" style="left:0px;top:174px;overflow:visible" width="1288" height="19"><path d="M168.8 18 L170.8 1.5 Q171 0 172.5 0 L1107.4 0 L1113.0 18 Z" fill="#e9e9e9"/><path d="M233.79999999999998 0 L236.39999999999998 0 L236.79999999999998 3.2 Z" fill="#fff" opacity=".9"/><path d="M231.39999999999998 0 C233.0 4.5 235.6 12.6 237.0 18" fill="none" stroke="#a6d3cb" stroke-width="1.1"/><path d="M304.90000000000003 0 L307.5 0 L307.90000000000003 3.2 Z" fill="#fff" opacity=".9"/><path d="M302.5 0 C304.1 4.5 306.7 12.6 308.1 18" fill="none" stroke="#a6d3cb" stroke-width="1.1"/><path d="M415.6 0 L418.2 0 L418.6 3.2 Z" fill="#fff" opacity=".9"/><path d="M413.2 0 C414.8 4.5 417.4 12.6 418.8 18" fill="none" stroke="#a6d3cb" stroke-width="1.1"/><path d="M474.0 0 L476.59999999999997 0 L477.0 3.2 Z" fill="#fff" opacity=".9"/><path d="M471.59999999999997 0 C473.2 4.5 475.79999999999995 12.6 477.2 18" fill="none" stroke="#a6d3cb" stroke-width="1.1"/><path d="M564.8000000000001 0 L567.4000000000001 0 L567.8000000000001 3.2 Z" fill="#fff" opacity=".9"/><path d="M562.4000000000001 0 C564.0 4.5 566.6 12.6 568.0 18" fill="none" stroke="#a6d3cb" stroke-width="1.1"/><path d="M668.1 0 L670.7 0 L671.1 3.2 Z" fill="#fff" opacity=".9"/><path d="M665.7 0 C667.3 4.5 669.9 12.6 671.3 18" fill="none" stroke="#a6d3cb" stroke-width="1.1"/><path d="M765.2 0 L767.8000000000001 0 L768.2 3.2 Z" fill="#fff" opacity=".9"/><path d="M762.8000000000001 0 C764.4 4.5 767.0 12.6 768.4 18" fill="none" stroke="#a6d3cb" stroke-width="1.1"/><path d="M928.4 0 L931.0 0 L931.4 3.2 Z" fill="#fff" opacity=".9"/><path d="M926.0 0 C927.5999999999999 4.5 930.1999999999999 12.6 931.5999999999999 18" fill="none" stroke="#a6d3cb" stroke-width="1.1"/><path d="M1003.9 0 L1006.5 0 L1006.9 3.2 Z" fill="#fff" opacity=".9"/><path d="M1001.5 0 C1003.0999999999999 4.5 1005.6999999999999 12.6 1007.0999999999999 18" fill="none" stroke="#a6d3cb" stroke-width="1.1"/><path d="M1109.8 0 L1112.4 0 L1112.8 3.2 Z" fill="#fff" opacity=".9"/><path d="M1107.4 0 C1109.0 4.5 1111.6000000000001 12.6 1113.0 18" fill="none" stroke="#a6d3cb" stroke-width="1.1"/></svg>
<svg class="ab" style="left:0px;top:193px;overflow:visible" width="1288" height="19"><path d="M162.8 18 L164.8 1.5 Q165 0 166.5 0 L1201.0 0 L1206.6 18 Z" fill="#e9e9e9"/><path d="M546.2 19 L550.8 0 Q551.2 -2 553.2 -2 L676.5 -2 Q678.1 -2 678.6 0 L683.3 19 Z" fill="#a1cec7"/><path d="M235.4 0 L238.0 0 L238.4 3.2 Z" fill="#fff" opacity=".9"/><path d="M233.0 0 C234.60000000000002 4.5 237.20000000000002 12.6 238.60000000000002 18" fill="none" stroke="#a6d3cb" stroke-width="1.1"/><path d="M322.3 0 L324.9 0 L325.3 3.2 Z" fill="#fff" opacity=".9"/><path d="M319.9 0 C321.5 4.5 324.09999999999997 12.6 325.5 18" fill="none" stroke="#a6d3cb" stroke-width="1.1"/><path d="M418.0 0 L420.59999999999997 0 L421.0 3.2 Z" fill="#fff" opacity=".9"/><path d="M415.59999999999997 0 C417.2 4.5 419.79999999999995 12.6 421.2 18" fill="none" stroke="#a6d3cb" stroke-width="1.1"/><path d="M773.9 0 L776.5 0 L776.9 3.2 Z" fill="#fff" opacity=".9"/><path d="M771.5 0 C773.0999999999999 4.5 775.6999999999999 12.6 777.0999999999999 18" fill="none" stroke="#a6d3cb" stroke-width="1.1"/><path d="M822.3000000000001 0 L824.9000000000001 0 L825.3000000000001 3.2 Z" fill="#fff" opacity=".9"/><path d="M819.9000000000001 0 C821.5 4.5 824.1 12.6 825.5 18" fill="none" stroke="#a6d3cb" stroke-width="1.1"/><path d="M984.1 0 L986.7 0 L987.1 3.2 Z" fill="#fff" opacity=".9"/><path d="M981.7 0 C983.3 4.5 985.9 12.6 987.3 18" fill="none" stroke="#a6d3cb" stroke-width="1.1"/><path d="M1107.8 0 L1110.4 0 L1110.8 3.2 Z" fill="#fff" opacity=".9"/><path d="M1105.4 0 C1107.0 4.5 1109.6000000000001 12.6 1111.0 18" fill="none" stroke="#a6d3cb" stroke-width="1.1"/><path d="M1203.3999999999999 0 L1206.0 0 L1206.3999999999999 3.2 Z" fill="#fff" opacity=".9"/><path d="M1201.0 0 C1202.6 4.5 1205.2 12.6 1206.6 18" fill="none" stroke="#a6d3cb" stroke-width="1.1"/></svg>
<span class="t k" style="left:176.3px;top:174.69px;font-size:11px;line-height:15px;color:#1a1a1a;letter-spacing:0.232px;">Cadastros</span>
<span class="t k" style="left:240.0px;top:174.69px;font-size:11px;line-height:15px;color:#1a1a1a;letter-spacing:0.343px;">Automação</span>
<span class="t k" style="left:311.0px;top:174.69px;font-size:11px;line-height:15px;color:#1a1a1a;letter-spacing:0.200px;">Conexões Externas</span>
<span class="t k" style="left:422.2px;top:174.69px;font-size:11px;line-height:15px;color:#1a1a1a;letter-spacing:0.313px;">Usuários</span>
<span class="t k" style="left:480.0px;top:174.69px;font-size:11px;line-height:15px;color:#1a1a1a;letter-spacing:0.056px;">Séries Remotas</span>
<span class="t k" style="left:571.4px;top:174.69px;font-size:11px;line-height:15px;color:#1a1a1a;letter-spacing:0.011px;">Mensagem NFC-e</span>
<span class="t k" style="left:674.2px;top:174.69px;font-size:11px;line-height:15px;color:#1a1a1a;letter-spacing:-0.120px;transform:scaleX(0.9867);transform-origin:0 0;">Web Service CTS</span>
<span class="t k" style="left:771.0px;top:174.69px;font-size:11px;line-height:15px;color:#1a1a1a;letter-spacing:0.287px;">Alterações de Rotina (Mérito)</span>
<span class="t k" style="left:934.4px;top:174.69px;font-size:11px;line-height:15px;color:#1a1a1a;letter-spacing:0.350px;">Logomarcas</span>
<span class="t k" style="left:1010.0px;top:174.69px;font-size:11px;line-height:15px;color:#1a1a1a;letter-spacing:0.080px;">Cadastros Básicos</span>
<span class="t k" style="left:196.5px;top:193.69px;font-size:11px;line-height:15px;color:#1a1a1a;letter-spacing:0.176px;"><u>D</u>ados</span>
<span class="t k" style="left:266.3px;top:193.69px;font-size:11px;line-height:15px;color:#1a1a1a;letter-spacing:0.158px;"><u>E</u>ndereço</span>
<span class="t k" style="left:349.3px;top:193.69px;font-size:11px;line-height:15px;color:#1a1a1a;letter-spacing:0.449px;"><u>P</u>arâmetros</span>
<span class="t k" style="left:444.2px;top:193.69px;font-size:11px;line-height:15px;color:#1a1a1a;letter-spacing:0.083px;"><u>R</u>esponsável Legal</span>
<span class="t k" style="left:578.1px;top:192.69px;font-size:11px;line-height:15px;color:#1a1a1a;letter-spacing:0.280px;">Série Do<u>c</u>umentos</span>
<span class="t k" style="left:708.4px;top:193.69px;font-size:11px;line-height:15px;color:#1a1a1a;letter-spacing:0.191px;">Men<u>s</u>agens</span>
<span class="t k" style="left:781.2px;top:193.69px;font-size:11px;line-height:15px;color:#1a1a1a;letter-spacing:0.707px;"><u>M</u>érito</span>
<span class="t k" style="left:858.0px;top:193.69px;font-size:11px;line-height:15px;color:#1a1a1a;letter-spacing:0.295px;">Formas de Pagamento</span>
<span class="t k" style="left:1013.0px;top:193.69px;font-size:11px;line-height:15px;color:#1a1a1a;letter-spacing:0.239px;">NF-e Parâmetros</span>
<span class="t k" style="left:1136.0px;top:193.69px;font-size:11px;line-height:15px;color:#1a1a1a;letter-spacing:0.343px;">Segmentos</span>
<svg class="ab" style="left:0;top:0" width="1288" height="215"><path d="M172.6 199.4 L181.6 195.2 L191 204.2 L182.8 209.8 Z" fill="#f4fbfb" stroke="#111" stroke-width="1.2" stroke-linejoin="round"/><path d="M176.4 199.6 L182.4 196.8 M178.4 201.6 L184.6 198.8 M180.4 203.6 L186.6 200.8 M182.4 205.6 L188.6 202.8 M184 207.6 L189.6 204.9" stroke="#3e9292" stroke-width=".9" stroke-dasharray="1.6 .8"/><path d="M247.4 203.2 H258.6 V209.4 H247.4 Z" fill="#fde6c4" stroke="#5a3a1a" stroke-width=".9"/><path d="M245.6 203.6 L253 196 L260.4 203.6" fill="none" stroke="#a8160e" stroke-width="1.8" stroke-linejoin="miter"/><path d="M247.4 202.6 L253 197.4 L258.6 202.6 Z" fill="#fde6c4"/><rect x="251.6" y="204.2" width="2.8" height="5" fill="#b3261c"/><rect x="248.8" y="204.4" width="1.6" height="2" fill="#444"/><rect x="255.6" y="204.4" width="1.6" height="2" fill="#444"/><g transform="translate(330 196)" shape-rendering="crispEdges"><rect x="0" y="0" width="14" height="13" rx="1" fill="#0a0a0a"/><rect x="1" y="1" width="3" height="1" fill="#f4ffff"/><rect x="5" y="1" width="8" height="1" fill="#e8ffff"/><rect x="1" y="3" width="3" height="9" fill="#fff"/><rect x="5" y="3" width="8" height="9" fill="#d6f7f7"/><rect x="2" y="4" width="1" height="1" fill="#8a2c3c"/><rect x="6" y="4" width="6" height="1" fill="#1f4c5c"/><rect x="2" y="6" width="1" height="1" fill="#8a2c3c"/><rect x="6" y="6" width="6" height="1" fill="#1f4c5c"/><rect x="2" y="8" width="1" height="1" fill="#8a2c3c"/><rect x="6" y="8" width="6" height="1" fill="#1f4c5c"/><rect x="2" y="10" width="1" height="1" fill="#8a2c3c"/><rect x="6" y="10" width="6" height="1" fill="#1f4c5c"/></g><g transform="translate(425 196)" shape-rendering="crispEdges"><rect x="0" y="0" width="14" height="13" rx="1" fill="#0a0a0a"/><rect x="1" y="1" width="3" height="1" fill="#f4ffff"/><rect x="5" y="1" width="8" height="1" fill="#e8ffff"/><rect x="1" y="3" width="3" height="9" fill="#fff"/><rect x="5" y="3" width="8" height="9" fill="#d6f7f7"/><rect x="2" y="4" width="1" height="1" fill="#8a2c3c"/><rect x="6" y="4" width="6" height="1" fill="#1f4c5c"/><rect x="2" y="6" width="1" height="1" fill="#8a2c3c"/><rect x="6" y="6" width="6" height="1" fill="#1f4c5c"/><rect x="2" y="8" width="1" height="1" fill="#8a2c3c"/><rect x="6" y="8" width="6" height="1" fill="#1f4c5c"/><rect x="2" y="10" width="1" height="1" fill="#8a2c3c"/><rect x="6" y="10" width="6" height="1" fill="#1f4c5c"/></g><rect x="556" y="197" width="17" height="9" fill="#0c0c0c"/><rect x="556" y="197" width="16" height="8" fill="#555"/><rect x="557" y="198" width="15" height="7" fill="#f1f1f1"/><rect x="566" y="199" width="5.5" height="1" fill="#8a8a8a"/><rect x="558" y="199" width="7" height="1" fill="#dcdcdc"/><rect x="558" y="201" width="12.6" height="1" fill="#80808a"/><rect x="558" y="203" width="12.6" height="1" fill="#80808a"/><g transform="translate(689 196)" shape-rendering="crispEdges"><rect x="0" y="0" width="14" height="13" rx="1" fill="#0a0a0a"/><rect x="1" y="1" width="3" height="1" fill="#f4ffff"/><rect x="5" y="1" width="8" height="1" fill="#e8ffff"/><rect x="1" y="3" width="3" height="9" fill="#fff"/><rect x="5" y="3" width="8" height="9" fill="#d6f7f7"/><rect x="2" y="4" width="1" height="1" fill="#8a2c3c"/><rect x="6" y="4" width="6" height="1" fill="#1f4c5c"/><rect x="2" y="6" width="1" height="1" fill="#8a2c3c"/><rect x="6" y="6" width="6" height="1" fill="#1f4c5c"/><rect x="2" y="8" width="1" height="1" fill="#8a2c3c"/><rect x="6" y="8" width="6" height="1" fill="#1f4c5c"/><rect x="2" y="10" width="1" height="1" fill="#8a2c3c"/><rect x="6" y="10" width="6" height="1" fill="#1f4c5c"/></g><path d="M831 203.6 L836.6 211 L852.6 203.2 L846.6 197.6 Z" fill="#0e2a08"/><path d="M831.6 204.6 L836.6 209.6 L851 202.8" fill="none" stroke="#2f8a1e" stroke-width="1.6"/><path d="M831.6 202 L846.6 196.6 L852 201.4 L836.6 207.8 Z" fill="#3fc01e" stroke="#0e2a08" stroke-width=".9" stroke-linejoin="round"/><ellipse cx="847.6" cy="200" rx="2.6" ry="1.8" fill="#5ad23a"/><path d="M833.4 194.4 Q835.6 193.4 837 194.6 L843 200.4 Q841.8 201.8 840.2 200.8 L837.4 199 L834.6 200.4 Z" fill="#f6cfb4" stroke="#3a2414" stroke-width=".5"/><path d="M996.6 196.4 H1002 L1005 199.4 V209.4 H996.6 Z" fill="#fff" stroke="#111" stroke-width="1.1"/><path d="M1002 196.4 V199.4 H1005" fill="none" stroke="#111" stroke-width=".9"/><path d="M998.4 202 H1001 M998.4 204.4 H1003 M998.4 206.8 H1003" stroke="#111" stroke-width="1.1"/><g transform="translate(1117 196)" shape-rendering="crispEdges"><rect x="0" y="0" width="14" height="13" rx="1" fill="#0a0a0a"/><rect x="1" y="1" width="3" height="1" fill="#f4ffff"/><rect x="5" y="1" width="8" height="1" fill="#e8ffff"/><rect x="1" y="3" width="3" height="9" fill="#fff"/><rect x="5" y="3" width="8" height="9" fill="#d6f7f7"/><rect x="2" y="4" width="1" height="1" fill="#8a2c3c"/><rect x="6" y="4" width="6" height="1" fill="#1f4c5c"/><rect x="2" y="6" width="1" height="1" fill="#8a2c3c"/><rect x="6" y="6" width="6" height="1" fill="#1f4c5c"/><rect x="2" y="8" width="1" height="1" fill="#8a2c3c"/><rect x="6" y="8" width="6" height="1" fill="#1f4c5c"/><rect x="2" y="10" width="1" height="1" fill="#8a2c3c"/><rect x="6" y="10" width="6" height="1" fill="#1f4c5c"/></g></svg>
<div style="left:159px;top:212px;width:1048px;height:1px;background:#a3d2c9;"></div>
<div style="left:159px;top:212px;width:1px;height:597px;background:#a3d2c9;"></div>
<div style="left:1206px;top:212px;width:3px;height:599px;background:#a1cec7;"></div>
<div style="left:158px;top:808px;width:1051px;height:3px;background:#a1cec7;"></div>
<div style="left:163px;top:216px;width:1038px;height:1px;background:#a9a9a9;"></div>
<div style="left:1200px;top:217px;width:1px;height:1px;background:#a9a9a9;"></div>
<div style="left:163px;top:216px;width:1px;height:587px;background:#a9a9a9;"></div>
<div style="left:278px;top:223px;width:920px;height:1px;background:#7e7e7e;"></div>
<span class="t" style="left:165.5px;top:217.69px;font-size:11px;line-height:15px;color:#000;letter-spacing:-0.120px;font-weight:bold;transform:scaleX(0.9672);transform-origin:0 0;">Séries Fiscais - SEFAZ</span>
<div style="left:266px;top:389px;width:932px;height:1px;background:#7e7e7e;"></div>
<div style="left:163px;top:802px;width:3px;height:1px;background:#a9a9a9;"></div>
<span class="t" style="left:165.5px;top:383.09px;font-size:11px;line-height:15px;color:#000;letter-spacing:-0.082px;font-weight:bold;">Séries NÃO Fiscais</span>
<span class="t" style="left:360.0px;top:235.69px;font-size:11px;line-height:15px;color:#000;letter-spacing:-0.120px;font-weight:bold;transform:scaleX(0.9140);transform-origin:0 0;">Série SEFAZ</span>
<span class="t" style="left:435.1px;top:235.69px;font-size:11px;line-height:15px;color:#000;letter-spacing:-0.120px;font-weight:bold;transform:scaleX(0.9709);transform-origin:0 0;">(Série) Nome</span>
<span class="t" style="left:740.0px;top:235.69px;font-size:11px;line-height:15px;color:#000;letter-spacing:-0.120px;font-weight:bold;transform:scaleX(0.9857);transform-origin:0 0;">Prox Num</span>
<span class="t k" style="left:170.0px;top:256.09px;font-size:11px;line-height:15px;color:#111;letter-spacing:-0.075px;">Série NFe:</span>
<div class="in" style="left:360px;top:253px;width:70px;height:20px;"></div>
<span class="t k" style="left:363.0px;top:256.29px;font-size:11px;line-height:15px;color:#111;">1</span>
<div style="left:369px;top:255px;width:1.2px;height:16px;background:#000;"></div>
<div class="dis" style="left:435px;top:253px;width:300px;height:20px;"></div>
<span class="t k" style="left:438.3px;top:256.09px;font-size:11px;line-height:15px;color:#8c8c8c;letter-spacing:-0.120px;transform:scaleX(0.9780);transform-origin:0 0;">(NF-e) NOTA ELETRONICA - BF21</span>
<div class="dis" style="left:740px;top:253px;width:70px;height:20px;"></div>
<span class="t k" style="left:743.3px;top:256.09px;font-size:11px;line-height:15px;color:#2a2a2a;letter-spacing:-0.120px;transform:scaleX(0.9829);transform-origin:0 0;">97008</span>
<div class="btn" style="left:815px;top:253px;width:22px;height:20px;"><i></i></div>
<div style="left:822.9px;top:265.9px;width:1.5px;height:1.5px;background:#15102c;"></div>
<div style="left:825.9px;top:265.9px;width:1.5px;height:1.5px;background:#15102c;"></div>
<div style="left:828.9px;top:265.9px;width:1.5px;height:1.5px;background:#15102c;"></div>
<span class="t k" style="left:170.0px;top:278.09px;font-size:11px;line-height:15px;color:#111;letter-spacing:-0.120px;transform:scaleX(0.9910);transform-origin:0 0;">Série NFCe:</span>
<div class="in" style="left:360px;top:275px;width:70px;height:20px;"></div>
<span class="t k" style="left:363.0px;top:278.29px;font-size:11px;line-height:15px;color:#111;">2</span>
<div class="dis" style="left:435px;top:275px;width:300px;height:20px;"></div>
<span class="t k" style="left:438.3px;top:278.09px;font-size:11px;line-height:15px;color:#8c8c8c;letter-spacing:-0.120px;transform:scaleX(0.9751);transform-origin:0 0;">(NFC-e) CUPOM ELETRONICO - BF21</span>
<div class="dis" style="left:740px;top:275px;width:70px;height:20px;"></div>
<span class="t k" style="left:743.3px;top:278.09px;font-size:11px;line-height:15px;color:#2a2a2a;letter-spacing:-0.120px;transform:scaleX(0.9903);transform-origin:0 0;">1928812</span>
<div class="btn" style="left:815px;top:275px;width:22px;height:20px;"><i></i></div>
<div style="left:822.9px;top:287.9px;width:1.5px;height:1.5px;background:#15102c;"></div>
<div style="left:825.9px;top:287.9px;width:1.5px;height:1.5px;background:#15102c;"></div>
<div style="left:828.9px;top:287.9px;width:1.5px;height:1.5px;background:#15102c;"></div>
<span class="t k" style="left:170.0px;top:300.09px;font-size:11px;line-height:15px;color:#111;letter-spacing:0.112px;">Série Nf. Serviço:</span>
<div class="in" style="left:360px;top:297px;width:70px;height:20px;"></div>
<div class="dis" style="left:435px;top:297px;width:300px;height:20px;"></div>
<div class="dis" style="left:740px;top:297px;width:70px;height:20px;"></div>
<div class="btn" style="left:815px;top:297px;width:22px;height:20px;"><i></i></div>
<div style="left:822.9px;top:309.9px;width:1.5px;height:1.5px;background:#15102c;"></div>
<div style="left:825.9px;top:309.9px;width:1.5px;height:1.5px;background:#15102c;"></div>
<div style="left:828.9px;top:309.9px;width:1.5px;height:1.5px;background:#15102c;"></div>
<span class="t k" style="left:170.0px;top:322.09px;font-size:11px;line-height:15px;color:#111;letter-spacing:0.210px;">Série Nf. Entrada:</span>
<div class="in" style="left:360px;top:319px;width:70px;height:20px;"></div>
<span class="t k" style="left:363.0px;top:322.29px;font-size:11px;line-height:15px;color:#111;">1</span>
<div class="dis" style="left:435px;top:319px;width:300px;height:20px;"></div>
<span class="t k" style="left:438.3px;top:322.09px;font-size:11px;line-height:15px;color:#8c8c8c;letter-spacing:-0.120px;transform:scaleX(0.9780);transform-origin:0 0;">(NF-e) NOTA ELETRONICA - BF21</span>
<div class="dis" style="left:740px;top:319px;width:70px;height:20px;"></div>
<span class="t k" style="left:743.3px;top:322.09px;font-size:11px;line-height:15px;color:#2a2a2a;letter-spacing:-0.120px;transform:scaleX(0.9829);transform-origin:0 0;">97008</span>
<div class="btn" style="left:815px;top:319px;width:22px;height:20px;"><i></i></div>
<div style="left:822.9px;top:331.9px;width:1.5px;height:1.5px;background:#15102c;"></div>
<div style="left:825.9px;top:331.9px;width:1.5px;height:1.5px;background:#15102c;"></div>
<div style="left:828.9px;top:331.9px;width:1.5px;height:1.5px;background:#15102c;"></div>
<span class="t k" style="left:170.0px;top:344.09px;font-size:11px;line-height:15px;color:#111;letter-spacing:0.235px;">Série Nf. Compl. Fatura:</span>
<div class="in" style="left:360px;top:341px;width:70px;height:20px;"></div>
<span class="t k" style="left:363.0px;top:344.29px;font-size:11px;line-height:15px;color:#111;">1</span>
<div class="dis" style="left:435px;top:341px;width:300px;height:20px;"></div>
<span class="t k" style="left:438.3px;top:344.09px;font-size:11px;line-height:15px;color:#8c8c8c;letter-spacing:-0.120px;transform:scaleX(0.9780);transform-origin:0 0;">(NF-e) NOTA ELETRONICA - BF21</span>
<div class="dis" style="left:740px;top:341px;width:70px;height:20px;"></div>
<span class="t k" style="left:743.3px;top:344.09px;font-size:11px;line-height:15px;color:#2a2a2a;letter-spacing:-0.120px;transform:scaleX(0.9829);transform-origin:0 0;">97008</span>
<div class="btn" style="left:815px;top:341px;width:22px;height:20px;"><i></i></div>
<div style="left:822.9px;top:353.9px;width:1.5px;height:1.5px;background:#15102c;"></div>
<div style="left:825.9px;top:353.9px;width:1.5px;height:1.5px;background:#15102c;"></div>
<div style="left:828.9px;top:353.9px;width:1.5px;height:1.5px;background:#15102c;"></div>
<span class="t k" style="left:170.0px;top:366.09px;font-size:11px;line-height:15px;color:#111;letter-spacing:0.239px;">Série Nf. Crédito Débito ICMS:</span>
<div class="in" style="left:360px;top:363px;width:70px;height:20px;"></div>
<span class="t k" style="left:363.0px;top:366.29px;font-size:11px;line-height:15px;color:#111;">1</span>
<div class="dis" style="left:435px;top:363px;width:300px;height:20px;"></div>
<span class="t k" style="left:438.3px;top:366.09px;font-size:11px;line-height:15px;color:#8c8c8c;letter-spacing:-0.120px;transform:scaleX(0.9780);transform-origin:0 0;">(NF-e) NOTA ELETRONICA - BF21</span>
<div class="dis" style="left:740px;top:363px;width:70px;height:20px;"></div>
<span class="t k" style="left:743.3px;top:366.09px;font-size:11px;line-height:15px;color:#2a2a2a;letter-spacing:-0.120px;transform:scaleX(0.9829);transform-origin:0 0;">97008</span>
<div class="btn" style="left:815px;top:363px;width:22px;height:20px;"><i></i></div>
<div style="left:822.9px;top:375.9px;width:1.5px;height:1.5px;background:#15102c;"></div>
<div style="left:825.9px;top:375.9px;width:1.5px;height:1.5px;background:#15102c;"></div>
<div style="left:828.9px;top:375.9px;width:1.5px;height:1.5px;background:#15102c;"></div>
<span class="t" style="left:325.0px;top:401.29px;font-size:11px;line-height:15px;color:#000;letter-spacing:-0.120px;font-weight:bold;transform:scaleX(0.9719);transform-origin:0 0;">Série</span>
<span class="t" style="left:380.0px;top:401.29px;font-size:11px;line-height:15px;color:#000;letter-spacing:-0.120px;font-weight:bold;transform:scaleX(0.9694);transform-origin:0 0;">(Série) Nome</span>
<span class="t" style="left:585.2px;top:401.29px;font-size:11px;line-height:15px;color:#000;letter-spacing:-0.120px;font-weight:bold;transform:scaleX(0.9838);transform-origin:0 0;">Prox Num</span>
<span class="t k" style="left:170.0px;top:421.89px;font-size:11px;line-height:15px;color:#111;letter-spacing:0.251px;">Nota Tipo 2 (manual):</span>
<div class="in" style="left:325px;top:419px;width:50px;height:20px;"></div>
<div class="dis" style="left:380px;top:419px;width:200px;height:20px;"></div>
<div class="dis" style="left:585px;top:419px;width:50px;height:20px;"></div>
<div class="btn" style="left:640px;top:419px;width:22px;height:20px;"><i></i></div>
<div style="left:647.9px;top:431.9px;width:1.5px;height:1.5px;background:#15102c;"></div>
<div style="left:650.9px;top:431.9px;width:1.5px;height:1.5px;background:#15102c;"></div>
<div style="left:653.9px;top:431.9px;width:1.5px;height:1.5px;background:#15102c;"></div>
<span class="t k" style="left:170.0px;top:443.89px;font-size:11px;line-height:15px;color:#111;letter-spacing:0.266px;">Fatura Venda Prazo:</span>
<div class="in" style="left:325px;top:441px;width:50px;height:20px;"></div>
<div class="dis" style="left:380px;top:441px;width:200px;height:20px;"></div>
<div class="dis" style="left:585px;top:441px;width:50px;height:20px;"></div>
<div class="btn" style="left:640px;top:441px;width:22px;height:20px;"><i></i></div>
<div style="left:647.9px;top:453.9px;width:1.5px;height:1.5px;background:#15102c;"></div>
<div style="left:650.9px;top:453.9px;width:1.5px;height:1.5px;background:#15102c;"></div>
<div style="left:653.9px;top:453.9px;width:1.5px;height:1.5px;background:#15102c;"></div>
<span class="t k" style="left:170.0px;top:465.89px;font-size:11px;line-height:15px;color:#111;letter-spacing:0.350px;">Fatura Ordem de Frete:</span>
<div class="in" style="left:325px;top:463px;width:50px;height:20px;"></div>
<div class="dis" style="left:380px;top:463px;width:200px;height:20px;"></div>
<div class="dis" style="left:585px;top:463px;width:50px;height:20px;"></div>
<div class="btn" style="left:640px;top:463px;width:22px;height:20px;"><i></i></div>
<div style="left:647.9px;top:475.9px;width:1.5px;height:1.5px;background:#15102c;"></div>
<div style="left:650.9px;top:475.9px;width:1.5px;height:1.5px;background:#15102c;"></div>
<div style="left:653.9px;top:475.9px;width:1.5px;height:1.5px;background:#15102c;"></div>
<span class="t k" style="left:170.0px;top:487.89px;font-size:11px;line-height:15px;color:#111;letter-spacing:0.259px;">Vale Combustível:</span>
<div class="in" style="left:325px;top:485px;width:50px;height:20px;"></div>
<span class="t k" style="left:328.0px;top:488.29px;font-size:11px;line-height:15px;color:#111;letter-spacing:-0.120px;transform:scaleX(0.9234);transform-origin:0 0;">VC</span>
<div class="dis" style="left:380px;top:485px;width:200px;height:20px;"></div>
<span class="t k" style="left:383.3px;top:488.09px;font-size:11px;line-height:15px;color:#8c8c8c;letter-spacing:-0.120px;transform:scaleX(0.9665);transform-origin:0 0;">(VC) VALE COMBUSTIVEL - BF21</span>
<div class="dis" style="left:585px;top:485px;width:50px;height:20px;"></div>
<span class="t k" style="left:588.3px;top:488.09px;font-size:11px;line-height:15px;color:#2a2a2a;letter-spacing:-0.120px;transform:scaleX(0.9769);transform-origin:0 0;">209</span>
<div class="btn" style="left:640px;top:485px;width:22px;height:20px;"><i></i></div>
<div style="left:647.9px;top:497.9px;width:1.5px;height:1.5px;background:#15102c;"></div>
<div style="left:650.9px;top:497.9px;width:1.5px;height:1.5px;background:#15102c;"></div>
<div style="left:653.9px;top:497.9px;width:1.5px;height:1.5px;background:#15102c;"></div>
<span class="t k" style="left:170.0px;top:509.89px;font-size:11px;line-height:15px;color:#111;letter-spacing:0.268px;">Vale Devolução Venda:</span>
<div class="in" style="left:325px;top:507px;width:50px;height:20px;"></div>
<span class="t k" style="left:328.0px;top:510.29px;font-size:11px;line-height:15px;color:#111;letter-spacing:-0.120px;transform:scaleX(0.9524);transform-origin:0 0;">VDC</span>
<div class="dis" style="left:380px;top:507px;width:200px;height:20px;"></div>
<span class="t k" style="left:383.3px;top:510.09px;font-size:11px;line-height:15px;color:#8c8c8c;letter-spacing:-0.120px;width:199.0px;overflow:hidden;transform:scaleX(0.9655);transform-origin:0 0;">(VDC) VALE DEVOLUCAO CLIENTE - BF21</span>
<div class="dis" style="left:585px;top:507px;width:50px;height:20px;"></div>
<span class="t k" style="left:588.3px;top:510.09px;font-size:11px;line-height:15px;color:#2a2a2a;">1</span>
<div class="btn" style="left:640px;top:507px;width:22px;height:20px;"><i></i></div>
<div style="left:647.9px;top:519.9px;width:1.5px;height:1.5px;background:#15102c;"></div>
<div style="left:650.9px;top:519.9px;width:1.5px;height:1.5px;background:#15102c;"></div>
<div style="left:653.9px;top:519.9px;width:1.5px;height:1.5px;background:#15102c;"></div>
<span class="t k" style="left:170.0px;top:531.89px;font-size:11px;line-height:15px;color:#111;letter-spacing:0.247px;">Vale-Estacionamento:</span>
<div class="in" style="left:325px;top:529px;width:50px;height:20px;"></div>
<div class="dis" style="left:380px;top:529px;width:200px;height:20px;"></div>
<div class="dis" style="left:585px;top:529px;width:50px;height:20px;"></div>
<div class="btn" style="left:640px;top:529px;width:22px;height:20px;"><i></i></div>
<div style="left:647.9px;top:541.9px;width:1.5px;height:1.5px;background:#15102c;"></div>
<div style="left:650.9px;top:541.9px;width:1.5px;height:1.5px;background:#15102c;"></div>
<div style="left:653.9px;top:541.9px;width:1.5px;height:1.5px;background:#15102c;"></div>
<span class="t" style="left:819.7px;top:401.29px;font-size:11px;line-height:15px;color:#000;letter-spacing:-0.120px;font-weight:bold;transform:scaleX(0.9757);transform-origin:0 0;">Série</span>
<span class="t" style="left:874.8px;top:401.29px;font-size:11px;line-height:15px;color:#000;letter-spacing:-0.120px;font-weight:bold;transform:scaleX(0.9709);transform-origin:0 0;">(Série) Nome</span>
<span class="t" style="left:1080.2px;top:401.29px;font-size:11px;line-height:15px;color:#000;letter-spacing:-0.120px;font-weight:bold;transform:scaleX(0.9838);transform-origin:0 0;">Prox Num</span>
<span class="t k" style="left:740.3px;top:421.89px;font-size:11px;line-height:15px;color:#111;letter-spacing:0.303px;">Débito Cliente:</span>
<div class="in" style="left:822px;top:419px;width:50px;height:20px;"></div>
<div class="dis" style="left:877px;top:419px;width:200px;height:20px;"></div>
<div class="dis" style="left:1082px;top:419px;width:50px;height:20px;"></div>
<div class="btn" style="left:1137px;top:419px;width:22px;height:20px;"><i></i></div>
<div style="left:1144.9px;top:431.9px;width:1.5px;height:1.5px;background:#15102c;"></div>
<div style="left:1147.9px;top:431.9px;width:1.5px;height:1.5px;background:#15102c;"></div>
<div style="left:1150.9px;top:431.9px;width:1.5px;height:1.5px;background:#15102c;"></div>
<span class="t k" style="left:736.4px;top:443.89px;font-size:11px;line-height:15px;color:#111;letter-spacing:0.298px;">Crédito Cliente:</span>
<div class="in" style="left:822px;top:441px;width:50px;height:20px;"></div>
<div class="dis" style="left:877px;top:441px;width:200px;height:20px;"></div>
<div class="dis" style="left:1082px;top:441px;width:50px;height:20px;"></div>
<div class="btn" style="left:1137px;top:441px;width:22px;height:20px;"><i></i></div>
<div style="left:1144.9px;top:453.9px;width:1.5px;height:1.5px;background:#15102c;"></div>
<div style="left:1147.9px;top:453.9px;width:1.5px;height:1.5px;background:#15102c;"></div>
<div style="left:1150.9px;top:453.9px;width:1.5px;height:1.5px;background:#15102c;"></div>
<span class="t k" style="left:751.5px;top:465.89px;font-size:11px;line-height:15px;color:#111;letter-spacing:0.345px;">Empréstimo:</span>
<div class="in" style="left:822px;top:463px;width:50px;height:20px;"></div>
<span class="t k" style="left:825.0px;top:466.29px;font-size:11px;line-height:15px;color:#111;letter-spacing:-0.120px;transform:scaleX(0.9260);transform-origin:0 0;">VCL</span>
<div class="dis" style="left:877px;top:463px;width:200px;height:20px;"></div>
<span class="t k" style="left:880.3px;top:466.09px;font-size:11px;line-height:15px;color:#8c8c8c;letter-spacing:-0.120px;transform:scaleX(0.9535);transform-origin:0 0;">(VCL) VALE CLIENTE - BF21</span>
<div class="dis" style="left:1082px;top:463px;width:50px;height:20px;"></div>
<span class="t k" style="left:1085.3px;top:466.09px;font-size:11px;line-height:15px;color:#2a2a2a;letter-spacing:0.150px;">78</span>
<div class="btn" style="left:1137px;top:463px;width:22px;height:20px;"><i></i></div>
<div style="left:1144.9px;top:475.9px;width:1.5px;height:1.5px;background:#15102c;"></div>
<div style="left:1147.9px;top:475.9px;width:1.5px;height:1.5px;background:#15102c;"></div>
<div style="left:1150.9px;top:475.9px;width:1.5px;height:1.5px;background:#15102c;"></div>
<span class="t k" style="left:779.5px;top:487.89px;font-size:11px;line-height:15px;color:#111;letter-spacing:-0.016px;">Recibo:</span>
<div class="in" style="left:822px;top:485px;width:50px;height:20px;"></div>
<div class="dis" style="left:877px;top:485px;width:200px;height:20px;"></div>
<div class="dis" style="left:1082px;top:485px;width:50px;height:20px;"></div>
<div class="btn" style="left:1137px;top:485px;width:22px;height:20px;"><i></i></div>
<div style="left:1144.9px;top:497.9px;width:1.5px;height:1.5px;background:#15102c;"></div>
<div style="left:1147.9px;top:497.9px;width:1.5px;height:1.5px;background:#15102c;"></div>
<div style="left:1150.9px;top:497.9px;width:1.5px;height:1.5px;background:#15102c;"></div>
<span class="t k" style="left:692.6px;top:509.89px;font-size:11px;line-height:15px;color:#111;letter-spacing:0.261px;">Fatura Reparcelamento:</span>
<div class="in" style="left:822px;top:507px;width:50px;height:20px;"></div>
<div class="dis" style="left:877px;top:507px;width:200px;height:20px;"></div>
<div class="dis" style="left:1082px;top:507px;width:50px;height:20px;"></div>
<div class="btn" style="left:1137px;top:507px;width:22px;height:20px;"><i></i></div>
<div style="left:1144.9px;top:519.9px;width:1.5px;height:1.5px;background:#15102c;"></div>
<div style="left:1147.9px;top:519.9px;width:1.5px;height:1.5px;background:#15102c;"></div>
<div style="left:1150.9px;top:519.9px;width:1.5px;height:1.5px;background:#15102c;"></div>
<svg class="ab" style="left:160px;top:628px" width="300" height="24"><path d="M8.8 22 L11.6 3.5 Q12 1.6 14 1.6 L121 1.6 Q123.5 1.6 124 4 L126.5 22 Z" fill="#a1cec7"/><path d="M126.5 22 L124.2 6 Q124 3.8 126.5 3.8 L255.5 3.8 Q257.6 3.8 258 6 L261 21.5 Z" fill="#ebebeb"/><path d="M253 3.8 Q257.6 3.8 258 6 L261.2 21.5" fill="none" stroke="#a3d2c9"/></svg>
<span class="t k" style="left:183.0px;top:631.29px;font-size:11px;line-height:15px;color:#111;letter-spacing:-0.120px;transform:scaleX(0.9934);transform-origin:0 0;">CFOP NF 2 - MD1</span>
<span class="t k" style="left:290.6px;top:631.69px;font-size:11px;line-height:15px;color:#111;letter-spacing:0.122px;">CFOP NF Complemento</span>
<div style="left:166px;top:650px;width:1035px;height:106px;background:#a1cec7;"></div>
<div style="left:167px;top:651px;width:1031px;height:102px;background:#9c9c9c;"></div>
<div style="left:165px;top:755px;width:1px;height:1px;background:#a1cec7;"></div>
<div style="left:168px;top:652px;width:1029px;height:100px;background:#fff;"></div>
<span class="t k" style="left:173.2px;top:655.99px;font-size:11px;line-height:15px;color:#111;letter-spacing:0.113px;">CFOP Nota 2 Com Cupom DE: *</span>
<div class="in" style="left:358px;top:653px;width:70px;height:20px;"></div>
<span class="t k" style="left:361.0px;top:656.29px;font-size:11px;line-height:15px;color:#111;letter-spacing:0.039px;">5929</span>
<div class="dis" style="left:433px;top:653px;width:300px;height:20px;"></div>
<span class="t k" style="left:436.3px;top:656.09px;font-size:11px;line-height:15px;color:#8c8c8c;letter-spacing:-0.120px;width:303.4px;overflow:hidden;transform:scaleX(0.9629);transform-origin:0 0;">LANCAMENTO EFETUADO EM DECORRENCIA DE EMISSAO DE CUPOM FISCAL</span>
<div class="btn" style="left:738px;top:653px;width:22px;height:20px;"><i></i></div>
<div style="left:745.9px;top:665.9px;width:1.5px;height:1.5px;background:#15102c;"></div>
<div style="left:748.9px;top:665.9px;width:1.5px;height:1.5px;background:#15102c;"></div>
<div style="left:751.9px;top:665.9px;width:1.5px;height:1.5px;background:#15102c;"></div>
<span class="t k" style="left:173.2px;top:677.99px;font-size:11px;line-height:15px;color:#111;letter-spacing:0.075px;">CFOP Nota 2 Sem Cupom DE: *</span>
<div class="in" style="left:358px;top:675px;width:70px;height:20px;"></div>
<span class="t k" style="left:361.0px;top:678.29px;font-size:11px;line-height:15px;color:#111;letter-spacing:0.039px;">5102</span>
<div class="dis" style="left:433px;top:675px;width:300px;height:20px;"></div>
<span class="t k" style="left:436.3px;top:678.09px;font-size:11px;line-height:15px;color:#8c8c8c;letter-spacing:-0.120px;width:296.5px;overflow:hidden;transform:scaleX(0.9853);transform-origin:0 0;">VENDA DE MERCADORIA ADQUIRIDA OU RECEBIDA DE TERCEIROS</span>
<div class="btn" style="left:738px;top:675px;width:22px;height:20px;"><i></i></div>
<div style="left:745.9px;top:687.9px;width:1.5px;height:1.5px;background:#15102c;"></div>
<div style="left:748.9px;top:687.9px;width:1.5px;height:1.5px;background:#15102c;"></div>
<div style="left:751.9px;top:687.9px;width:1.5px;height:1.5px;background:#15102c;"></div>
<span class="t k" style="left:173.2px;top:699.99px;font-size:11px;line-height:15px;color:#111;letter-spacing:0.099px;">CFOP Nota 2 Com Cupom FE: *</span>
<div class="in" style="left:358px;top:697px;width:70px;height:20px;"></div>
<span class="t k" style="left:361.0px;top:700.29px;font-size:11px;line-height:15px;color:#111;letter-spacing:0.039px;">6929</span>
<div class="dis" style="left:433px;top:697px;width:300px;height:20px;"></div>
<span class="t k" style="left:436.3px;top:700.09px;font-size:11px;line-height:15px;color:#8c8c8c;letter-spacing:-0.120px;width:303.4px;overflow:hidden;transform:scaleX(0.9629);transform-origin:0 0;">LANCAMENTO EFETUADO EM DECORRENCIA DE EMISSAO DE CUPOM FISCAL</span>
<div class="btn" style="left:738px;top:697px;width:22px;height:20px;"><i></i></div>
<div style="left:745.9px;top:709.9px;width:1.5px;height:1.5px;background:#15102c;"></div>
<div style="left:748.9px;top:709.9px;width:1.5px;height:1.5px;background:#15102c;"></div>
<div style="left:751.9px;top:709.9px;width:1.5px;height:1.5px;background:#15102c;"></div>
<span class="t k" style="left:173.2px;top:721.99px;font-size:11px;line-height:15px;color:#111;letter-spacing:0.049px;">CFOP Nota 2 Sem Cupom FE: *</span>
<div class="in" style="left:358px;top:719px;width:70px;height:20px;"></div>
<span class="t k" style="left:361.0px;top:722.29px;font-size:11px;line-height:15px;color:#111;letter-spacing:0.039px;">6102</span>
<div class="dis" style="left:433px;top:719px;width:300px;height:20px;"></div>
<span class="t k" style="left:436.3px;top:722.09px;font-size:11px;line-height:15px;color:#8c8c8c;letter-spacing:-0.120px;width:296.5px;overflow:hidden;transform:scaleX(0.9853);transform-origin:0 0;">VENDA DE MERCADORIA ADQUIRIDA OU RECEBIDA DE TERCEIROS</span>
<div class="btn" style="left:738px;top:719px;width:22px;height:20px;"><i></i></div>
<div style="left:745.9px;top:731.9px;width:1.5px;height:1.5px;background:#15102c;"></div>
<div style="left:748.9px;top:731.9px;width:1.5px;height:1.5px;background:#15102c;"></div>
<div style="left:751.9px;top:731.9px;width:1.5px;height:1.5px;background:#15102c;"></div>
<div style="left:170px;top:761px;width:13px;height:13px;border:1px solid #7a7a7a;background:linear-gradient(135deg,#fff,#e9e9e9);"></div>
<svg class="ab" style="left:170px;top:761px" width="13" height="13"><path d="M3.1 5.6 L5.3 9.2 L9.7 3.4" fill="none" stroke="#5c5c5c" stroke-width="2.4"/></svg>
<span class="t k" style="left:187.3px;top:759.69px;font-size:11px;line-height:15px;color:#111;letter-spacing:0.205px;">Destacar Impostos na Emissão de Notas s/Cupom ou Notas s/Faturas. (Instrução Sefaz: Destacar)</span>
<div class="btn" style="left:1170px;top:780px;width:26px;height:22px;"></div>
<span class="t k" style="left:1177.6px;top:784.06px;font-size:10.5px;line-height:15px;color:#1a1a1a;letter-spacing:0.134px;">&gt;&gt;</span>
<div class="btn" style="left:496px;top:815px;width:90px;height:26px;"></div>
<div class="btn" style="left:591px;top:815px;width:90px;height:26px;"></div>
<div class="btn" style="left:686px;top:815px;width:90px;height:26px;"></div>
<div class="btn" style="left:781px;top:815px;width:90px;height:26px;"></div>
<span class="t k" style="left:534.3px;top:820.89px;font-size:11px;line-height:15px;color:#111;letter-spacing:0.399px;">A<u>l</u>terar</span>
<span class="t k" style="left:629.7px;top:820.89px;font-size:11px;line-height:15px;color:#111;letter-spacing:0.081px;"><u>E</u>xcluir</span>
<span class="t k" style="left:716.0px;top:820.89px;font-size:11px;line-height:15px;color:#111;letter-spacing:0.328px;"><u>C</u>onsultar</span>
<span class="t k" style="left:818.5px;top:820.89px;font-size:11px;line-height:15px;color:#111;letter-spacing:0.415px;">Lim<u>p</u>ar</span>
<svg class="ab" style="left:0;top:800px" width="1288" height="50"><path d="M514 28.4 L519.2 34.6 L529.6 22" fill="none" stroke="#0a4a14" stroke-width="4.2" stroke-linejoin="miter"/><path d="M514.4 28.2 L519.2 33.6 L529 22.2" fill="none" stroke="#22b522" stroke-width="2.4"/><path d="M612.6 23.4 L622.6 35 M622.4 23 L612.4 35.4" stroke="#a30d0d" stroke-width="3.9" stroke-linecap="round"/><path d="M612.8 23.6 L622.2 34.6" stroke="#e03a3a" stroke-width="1"/><rect x="695.6" y="22" width="14.4" height="13" fill="#fff" stroke="#111" stroke-width="1.1"/><rect x="696" y="22.4" width="13.6" height="2.6" fill="#2233bb"/><path d="M696 27.6 H709.6 M696 30 H709.6 M696 32.4 H709.6 M699 25 V35 M702 25 V35 M705 25 V35 M707.6 25 V35" stroke="#444" stroke-width=".8"/><rect x="797.6" y="22.6" width="15" height="13" fill="#fff" stroke="#111" stroke-width="1.2"/><rect x="798" y="23" width="14.2" height="2.4" fill="#2233bb"/></svg>
<svg class="ab" style="left:0;top:0" width="1288" height="877"><path d="M107.0 287.0 L95.4 205.3" stroke="#fe0404" stroke-width="3.4" fill="none"/><path d="M92.5 184.5 L104.1 206.1 L87.3 208.5 Z" fill="#fe0404"/><path d="M883.0 270.0 L655.2 217.7" stroke="#fe0404" stroke-width="3.4" fill="none"/><path d="M634.7 213.0 L659.0 209.9 L655.2 226.4 Z" fill="#fe0404"/><path d="M830.4 593.6 L685.3 550.6" stroke="#fe0404" stroke-width="3.4" fill="none"/><path d="M665.2 544.6 L689.7 543.0 L684.8 559.3 Z" fill="#fe0404"/><circle cx="91" cy="310" r="18.6" fill="#fff" stroke="#242424" stroke-width="1.4"/><circle cx="91" cy="310" r="17.4" fill="#fe0404"/><text x="91" y="316.9" text-anchor="middle" font-family="Liberation Sans,sans-serif" font-weight="bold" font-size="19.5" fill="#fff" stroke="#fff" stroke-width=".5">1</text><circle cx="913.1" cy="270.7" r="18.6" fill="#fff" stroke="#242424" stroke-width="1.4"/><circle cx="913.1" cy="270.7" r="17.4" fill="#fe0404"/><text x="913.1" y="277.59999999999997" text-anchor="middle" font-family="Liberation Sans,sans-serif" font-weight="bold" font-size="19.5" fill="#fff" stroke="#fff" stroke-width=".5">2</text><circle cx="857" cy="592.9" r="18.6" fill="#fff" stroke="#242424" stroke-width="1.4"/><circle cx="857" cy="592.9" r="17.4" fill="#fe0404"/><text x="857" y="599.8" text-anchor="middle" font-family="Liberation Sans,sans-serif" font-weight="bold" font-size="19.5" fill="#fff" stroke="#fff" stroke-width=".5">3</text></svg>
</div>
</body></html>
